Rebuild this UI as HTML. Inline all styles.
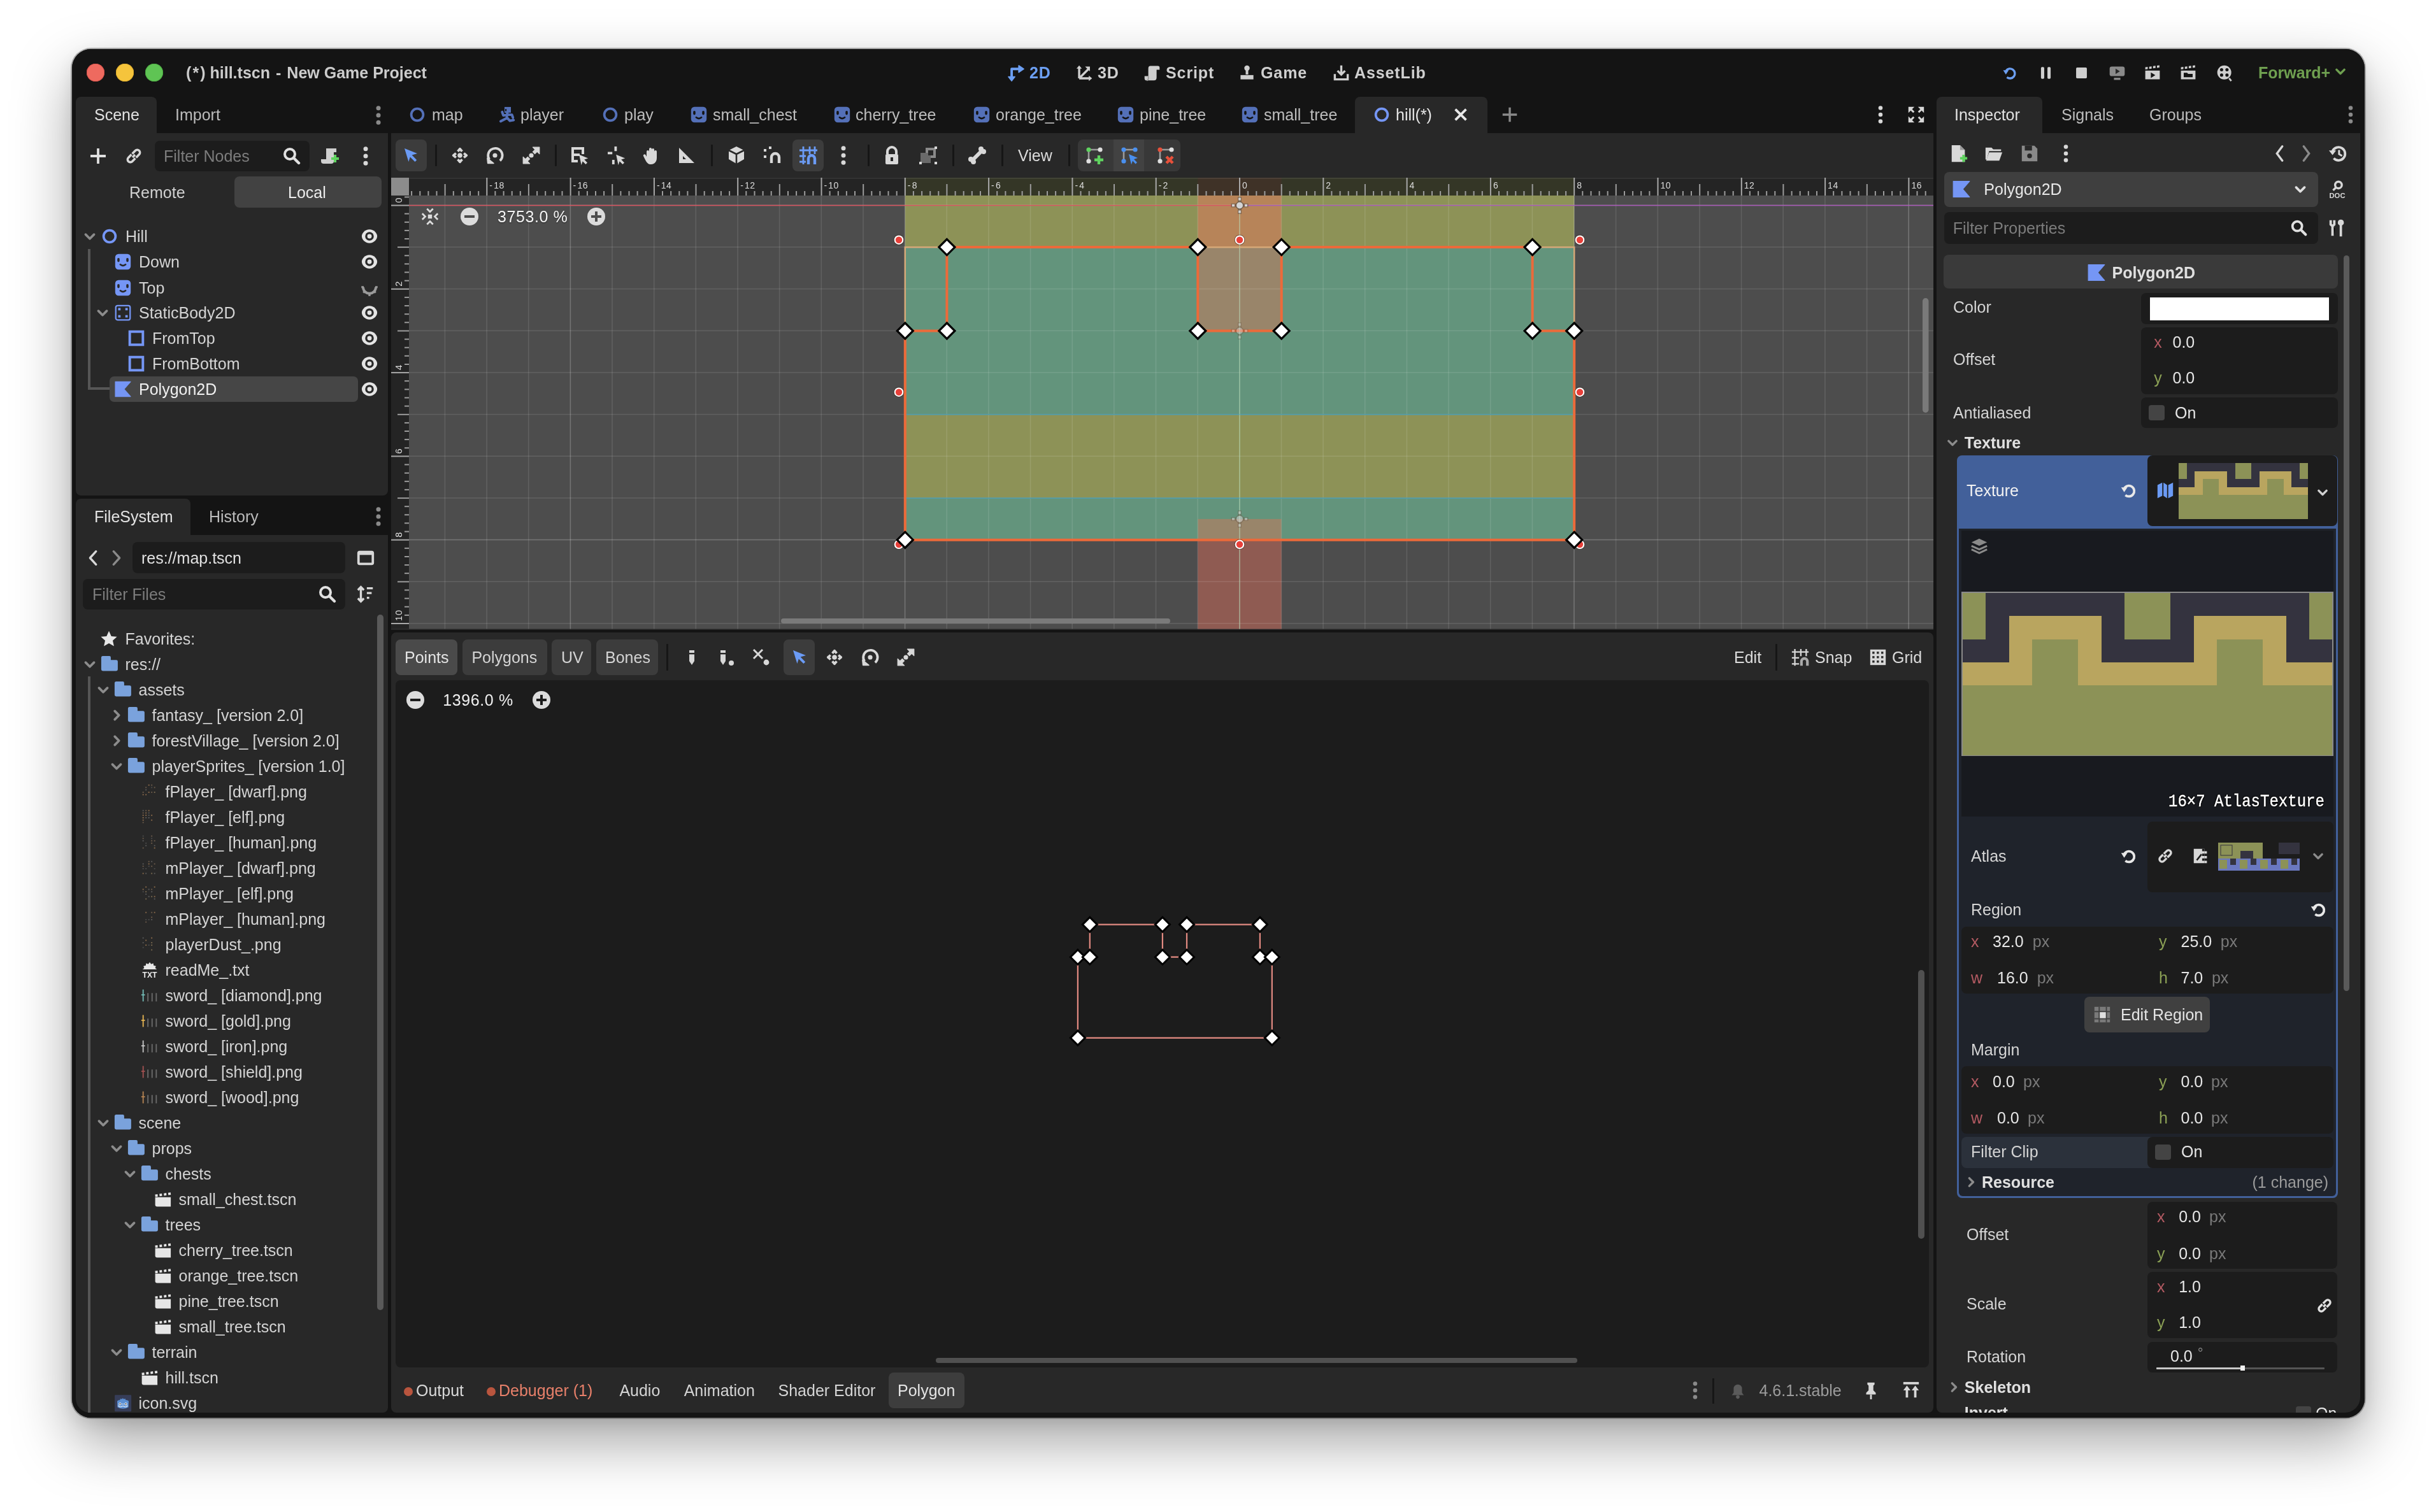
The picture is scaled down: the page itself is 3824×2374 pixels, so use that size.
<!DOCTYPE html>
<html><head><meta charset="utf-8"><title>Godot</title>
<style>
html,body{margin:0;padding:0;background:#fff;width:3824px;height:2374px;overflow:hidden;}
body{font-family:"Liberation Sans",sans-serif;position:relative;}
.a{position:absolute;}
.t{position:absolute;line-height:40px;white-space:nowrap;}
svg.a{overflow:visible;}
#win{position:absolute;left:112.5px;top:77px;width:3599px;height:2148.5px;background:#141414;border-radius:30px;overflow:hidden;
}
#shd{position:absolute;left:112.5px;top:77px;width:3599px;height:2148.5px;background:#141414;border-radius:30px;box-shadow:0 0 0 2px rgba(0,0,0,0.27),0 38px 92px rgba(0,0,0,0.36),0 8px 24px rgba(0,0,0,0.08);}
#pg{position:absolute;left:-112.5px;top:-77px;width:3824px;height:2374px;will-change:transform;}
</style></head><body>
<div id="shd"></div><div id="win"><div id="pg">

<div class="a" style="left:136px;top:100px;width:28px;height:28px;background:#ee6a5f;border-radius:14px;box-shadow:inset 0 0 0 0.8px #d9524a;"></div><div class="a" style="left:182px;top:100px;width:28px;height:28px;background:#f5c43c;border-radius:14px;box-shadow:inset 0 0 0 0.8px #dcaa2a;"></div><div class="a" style="left:228px;top:100px;width:28px;height:28px;background:#5fc454;border-radius:14px;box-shadow:inset 0 0 0 0.8px #4aa840;"></div><div class="t" style="left:292px;top:94px;font-size:25px;color:#cccccc;font-weight:bold;">(&#8202;*&#8202;) hill.tscn &#8202;- &#8202;New Game Project</div><svg class="a" style="left:1581.5px;top:100.5px;" width="27" height="27" viewBox="0 0 16 16"><path d="M3.6 12.5V4.3H11" stroke="#6c9ff2" stroke-width="2.3" fill="none" stroke-linejoin="round"/><path d="M10.2 1.2L14.8 4.3 10.2 7.4z" fill="#6c9ff2" stroke="#6c9ff2" stroke-width="1" stroke-linejoin="round"/><path d="M.6 11.6L3.6 15.4 6.6 11.6z" fill="#6c9ff2" stroke="#6c9ff2" stroke-width="1" stroke-linejoin="round"/></svg><div class="t" style="left:1616px;top:94px;font-size:25px;color:#6c9ff2;font-weight:bold;letter-spacing:0.9px;">2D</div><svg class="a" style="left:1688.5px;top:100.5px;" width="27" height="27" viewBox="0 0 16 16"><path d="M3 13V3M3 13h10M3 13l9-9" stroke="#cfcfcf" stroke-width="2" fill="none"/><path d="M3 1l-2.5 3h5zM15 13l-3-2.5v5zM13 2v4.5L8.5 2z" fill="#cfcfcf"/></svg><div class="t" style="left:1723px;top:94px;font-size:25px;color:#cfcfcf;font-weight:bold;letter-spacing:0.9px;">3D</div><svg class="a" style="left:1794.5px;top:100.5px;" width="27" height="27" viewBox="0 0 16 16"><path d="M6.5 1.5H13.5Q15 1.5 15 3V5H12.2V12.5Q12.2 15 9.7 15H3Q1 15 1 13V11H4.5V4Q4.5 1.5 6.5 1.5Z" fill="#cfcfcf"/><path d="M4.5 11V13.5Q4.5 15 3 15" stroke="#9a9a9a" stroke-width="1" fill="none"/></svg><div class="t" style="left:1830px;top:94px;font-size:25px;color:#cfcfcf;font-weight:bold;letter-spacing:0.9px;">Script</div><svg class="a" style="left:1943.5px;top:100.5px;" width="27" height="27" viewBox="0 0 16 16"><circle cx="8" cy="3.5" r="2.5" fill="#cfcfcf"/><path d="M6.8 5.5h2.4v4H6.8z" fill="#cfcfcf"/><path d="M2 10h12v4H2z" fill="#cfcfcf"/></svg><div class="t" style="left:1979px;top:94px;font-size:25px;color:#cfcfcf;font-weight:bold;letter-spacing:0.9px;">Game</div><svg class="a" style="left:2091.5px;top:100.5px;" width="27" height="27" viewBox="0 0 16 16"><path d="M8 1v8M4.5 6L8 9.5 11.5 6" stroke="#cfcfcf" stroke-width="2" fill="none"/><path d="M2 9v5h12V9" stroke="#cfcfcf" stroke-width="2" fill="none"/></svg><div class="t" style="left:2126px;top:94px;font-size:25px;color:#cfcfcf;font-weight:bold;letter-spacing:0.9px;">AssetLib</div><svg class="a" style="left:3141.5px;top:100.5px;" width="27" height="27" viewBox="0 0 16 16"><path d="M4.2 6A4.5 4.5 0 1 1 5 12" stroke="#6c9ff2" stroke-width="2" fill="none"/><path d="M1.5 5.5h5.2L4 9.5z" fill="#6c9ff2"/></svg><svg class="a" style="left:3197.5px;top:100.5px;" width="27" height="27" viewBox="0 0 16 16"><rect x="3.5" y="2.5" width="3" height="11" rx="1" fill="#cfcfcf"/><rect x="9.5" y="2.5" width="3" height="11" rx="1" fill="#cfcfcf"/></svg><svg class="a" style="left:3253.5px;top:100.5px;" width="27" height="27" viewBox="0 0 16 16"><rect x="3" y="3" width="10" height="10" rx="1" fill="#cfcfcf"/></svg><svg class="a" style="left:3309.5px;top:100.5px;" width="27" height="27" viewBox="0 0 16 16"><rect x="1" y="2" width="14" height="9" rx="2" fill="#8a8a8a"/><path d="M6.5 4v5l4-2.5z" fill="#282828"/><path d="M5 13.5h6" stroke="#8a8a8a" stroke-width="2"/></svg><svg class="a" style="left:3365.0px;top:100.0px;" width="28" height="28" viewBox="0 0 16 16"><path d="M1.5 6.2h13v7.8h-13z" fill="#cfcfcf"/><path d="M1.5 3.2l2.2-.3v2l-2.2.3zM5 2.7l2.2-.3v2l-2.2.3zM8.5 2.2l2.2-.3v2l-2.2.3zM12 1.7l2.2-.3v2l-2.2.3z" fill="#cfcfcf"/><path d="M6.5 7.8v5l4-2.5z" fill="#141414"/></svg><svg class="a" style="left:3421.0px;top:100.0px;" width="28" height="28" viewBox="0 0 16 16"><path d="M1.5 6.2h13v7.8h-13z" fill="#cfcfcf"/><path d="M1.5 3.2l2.2-.3v2l-2.2.3zM5 2.7l2.2-.3v2l-2.2.3zM8.5 2.2l2.2-.3v2l-2.2.3zM12 1.7l2.2-.3v2l-2.2.3z" fill="#cfcfcf"/><path d="M4 8.2h3l1 1h4v3H4z" fill="#141414"/></svg><svg class="a" style="left:3478.5px;top:100.5px;" width="27" height="27" viewBox="0 0 16 16"><circle cx="7.5" cy="7.5" r="6.5" fill="#cfcfcf"/><circle cx="5" cy="5" r="1.5" fill="#141414"/><circle cx="10" cy="5" r="1.5" fill="#141414"/><circle cx="5" cy="10" r="1.5" fill="#141414"/><circle cx="10" cy="10" r="1.5" fill="#141414"/><path d="M12 13l2 2.5" stroke="#cfcfcf" stroke-width="1.6"/></svg><div class="t" style="left:3545px;top:94px;font-size:25px;color:#6fa050;font-weight:bold;">Forward+</div><svg class="a" style="left:3660.0px;top:98.0px;" width="28" height="28" viewBox="0 0 16 16"><path d="M4.5 6.5L8 10l3.5-3.5" stroke="#6fa050" stroke-width="2" fill="none" stroke-linecap="round" stroke-linejoin="round"/></svg>
<div class="a" style="left:119px;top:152px;width:127px;height:60px;background:#282828;border-radius:8px 8px 0 0;"></div><div class="a" style="left:119px;top:208.5px;width:490px;height:569.5px;background:#282828;border-radius:0 0 8px 8px;"></div><div class="t" style="left:148px;top:160px;font-size:25px;color:#e2e2e2;">Scene</div><div class="t" style="left:275px;top:160px;font-size:25px;color:#bcbcbc;">Import</div><svg class="a" style="left:578.0px;top:165.0px;" width="32" height="32" viewBox="0 0 16 16"><circle cx="8" cy="2.4" r="1.75" fill="#8a8a8a"/><circle cx="8" cy="8" r="1.75" fill="#8a8a8a"/><circle cx="8" cy="13.6" r="1.75" fill="#8a8a8a"/></svg><svg class="a" style="left:138.0px;top:229.0px;" width="32" height="32" viewBox="0 0 16 16"><path d="M8 2v12M2 8h12" stroke="#e0e0e0" stroke-width="1.9"/></svg><svg class="a" style="left:194.0px;top:229.0px;" width="32" height="32" viewBox="0 0 16 16"><path d="M7 9l2-2" stroke="#d8d8d8" stroke-width="1.8"/><path d="M6.2 6.8l-2.4 2.4a2 2 0 0 0 3 3l2.4-2.4M9.8 9.2l2.4-2.4a2 2 0 0 0-3-3L6.8 6.2" stroke="#d8d8d8" stroke-width="1.8" fill="none"/></svg><div class="a" style="left:243px;top:221px;width:243px;height:48px;background:#1c1c1c;border-radius:8px;"></div><div class="t" style="left:257px;top:225px;font-size:25px;color:#7c7c7c;">Filter Nodes</div><svg class="a" style="left:442.0px;top:229.0px;" width="32" height="32" viewBox="0 0 16 16"><circle cx="6.5" cy="6.5" r="4" stroke="#e0e0e0" stroke-width="2" fill="none"/><path d="M9.5 9.5l4 4" stroke="#e0e0e0" stroke-width="2.2" stroke-linecap="round"/></svg><svg class="a" style="left:502.0px;top:229.0px;" width="32" height="32" viewBox="0 0 16 16"><path d="M5 2h8v3h-2v7a2 2 0 0 1-2 2H3a2 2 0 0 1-2-2v-1.5h4z" fill="#cfcfcf"/><path d="M9 10h6M12 7v6" stroke="#5fd35f" stroke-width="2"/></svg><svg class="a" style="left:558.0px;top:229.0px;" width="32" height="32" viewBox="0 0 16 16"><circle cx="8" cy="2.4" r="1.75" fill="#d8d8d8"/><circle cx="8" cy="8" r="1.75" fill="#d8d8d8"/><circle cx="8" cy="13.6" r="1.75" fill="#d8d8d8"/></svg><div class="t" style="left:203px;top:282px;font-size:25px;color:#d0d0d0;">Remote</div><div class="a" style="left:368px;top:277px;width:231px;height:49px;background:#424242;border-radius:8px;"></div><div class="t" style="left:452px;top:282px;font-size:25px;color:#ececec;">Local</div><div class="a" style="left:138px;top:391px;width:4px;height:221px;background:#565656;"></div><div class="a" style="left:138px;top:608px;width:34px;height:4px;background:#565656;"></div><div class="a" style="left:172px;top:591px;width:390px;height:40px;background:#464646;border-radius:7px;"></div><svg class="a" style="left:125.5px;top:356.0px;" width="30" height="30" viewBox="0 0 16 16"><path d="M4.5 6.5L8 10l3.5-3.5" stroke="#8c8c8c" stroke-width="2" fill="none" stroke-linecap="round" stroke-linejoin="round"/></svg><svg class="a" style="left:157.0px;top:356.0px;" width="30" height="30" viewBox="0 0 16 16"><circle cx="8" cy="8" r="5" stroke="#7596f5" stroke-width="2" fill="none"/></svg><div class="t" style="left:197px;top:351px;font-size:25px;color:#d4d4d4;">Hill</div><svg class="a" style="left:565.0px;top:356.0px;" width="30" height="30" viewBox="0 0 16 16"><path d="M8 2.3C4.3 2.3 1.55 5.4 1.55 8S4.3 13.7 8 13.7 14.45 10.6 14.45 8 11.7 2.3 8 2.3z" fill="#e4e4e4"/><circle cx="8" cy="8" r="3.6" fill="#282828"/><circle cx="8" cy="8" r="1.85" fill="#e4e4e4"/></svg><svg class="a" style="left:178.0px;top:396.0px;" width="30" height="30" viewBox="0 0 16 16"><rect x="1.5" y="1.5" width="13" height="13" rx="2.8" fill="#7596f5"/><rect x="3.3" y="4.8" width="1.9" height="3.4" rx=".95" fill="#282828"/><rect x="10.8" y="4.8" width="1.9" height="3.4" rx=".95" fill="#282828"/><path d="M5.8 10.3q2.2 1.9 4.4 0" stroke="#282828" stroke-width="1.4" fill="none" stroke-linecap="round"/></svg><div class="t" style="left:218px;top:391px;font-size:25px;color:#d4d4d4;">Down</div><svg class="a" style="left:565.0px;top:396.0px;" width="30" height="30" viewBox="0 0 16 16"><path d="M8 2.3C4.3 2.3 1.55 5.4 1.55 8S4.3 13.7 8 13.7 14.45 10.6 14.45 8 11.7 2.3 8 2.3z" fill="#e4e4e4"/><circle cx="8" cy="8" r="3.6" fill="#282828"/><circle cx="8" cy="8" r="1.85" fill="#e4e4e4"/></svg><svg class="a" style="left:178.0px;top:437.0px;" width="30" height="30" viewBox="0 0 16 16"><rect x="1.5" y="1.5" width="13" height="13" rx="2.8" fill="#7596f5"/><rect x="3.3" y="4.8" width="1.9" height="3.4" rx=".95" fill="#282828"/><rect x="10.8" y="4.8" width="1.9" height="3.4" rx=".95" fill="#282828"/><path d="M5.8 10.3q2.2 1.9 4.4 0" stroke="#282828" stroke-width="1.4" fill="none" stroke-linecap="round"/></svg><div class="t" style="left:218px;top:432px;font-size:25px;color:#d4d4d4;">Top</div><svg class="a" style="left:565.0px;top:437.0px;" width="30" height="30" viewBox="0 0 16 16"><g transform="translate(0 0.9)"><path d="M1.6 6.4A6.4 6.4 0 0 0 14.4 6.4H12.3A4.3 4.3 0 0 1 3.7 6.4Z" fill="#9a9a9a"/><rect x="7.1" y="12" width="1.8" height="2" fill="#9a9a9a"/><rect x="2.6" y="9.6" width="1.8" height="1.8" transform="rotate(45 3.5 10.5)" fill="#9a9a9a"/><rect x="11.6" y="9.6" width="1.8" height="1.8" transform="rotate(45 12.5 10.5)" fill="#9a9a9a"/><rect x="1.2" y="5.6" width="2" height="1.6" fill="#9a9a9a"/><rect x="12.8" y="5.6" width="2" height="1.6" fill="#9a9a9a"/></g></svg><svg class="a" style="left:146.0px;top:476.0px;" width="30" height="30" viewBox="0 0 16 16"><path d="M4.5 6.5L8 10l3.5-3.5" stroke="#8c8c8c" stroke-width="2" fill="none" stroke-linecap="round" stroke-linejoin="round"/></svg><svg class="a" style="left:178.0px;top:476.0px;" width="30" height="30" viewBox="0 0 16 16"><rect x="2" y="2" width="12" height="12" rx="1.5" stroke="#7596f5" stroke-width="1.2" fill="none"/><rect x="4" y="4" width="2" height="2" fill="#7596f5"/><rect x="10" y="4" width="2" height="2" fill="#7596f5"/><rect x="4" y="10" width="2" height="2" fill="#7596f5"/><rect x="10" y="10" width="2" height="2" fill="#7596f5"/></svg><div class="t" style="left:218px;top:471px;font-size:25px;color:#d4d4d4;">StaticBody2D</div><svg class="a" style="left:565.0px;top:476.0px;" width="30" height="30" viewBox="0 0 16 16"><path d="M8 2.3C4.3 2.3 1.55 5.4 1.55 8S4.3 13.7 8 13.7 14.45 10.6 14.45 8 11.7 2.3 8 2.3z" fill="#e4e4e4"/><circle cx="8" cy="8" r="3.6" fill="#282828"/><circle cx="8" cy="8" r="1.85" fill="#e4e4e4"/></svg><svg class="a" style="left:199.0px;top:516.0px;" width="30" height="30" viewBox="0 0 16 16"><rect x="2.5" y="2.5" width="11" height="11" stroke="#7596f5" stroke-width="2.1" fill="none"/></svg><div class="t" style="left:239px;top:511px;font-size:25px;color:#d4d4d4;">FromTop</div><svg class="a" style="left:565.0px;top:516.0px;" width="30" height="30" viewBox="0 0 16 16"><path d="M8 2.3C4.3 2.3 1.55 5.4 1.55 8S4.3 13.7 8 13.7 14.45 10.6 14.45 8 11.7 2.3 8 2.3z" fill="#e4e4e4"/><circle cx="8" cy="8" r="3.6" fill="#282828"/><circle cx="8" cy="8" r="1.85" fill="#e4e4e4"/></svg><svg class="a" style="left:199.0px;top:556.0px;" width="30" height="30" viewBox="0 0 16 16"><rect x="2.5" y="2.5" width="11" height="11" stroke="#7596f5" stroke-width="2.1" fill="none"/></svg><div class="t" style="left:239px;top:551px;font-size:25px;color:#d4d4d4;">FromBottom</div><svg class="a" style="left:565.0px;top:556.0px;" width="30" height="30" viewBox="0 0 16 16"><path d="M8 2.3C4.3 2.3 1.55 5.4 1.55 8S4.3 13.7 8 13.7 14.45 10.6 14.45 8 11.7 2.3 8 2.3z" fill="#e4e4e4"/><circle cx="8" cy="8" r="3.6" fill="#282828"/><circle cx="8" cy="8" r="1.85" fill="#e4e4e4"/></svg><svg class="a" style="left:178.0px;top:596.0px;" width="30" height="30" viewBox="0 0 16 16"><path d="M1.6 1.8h12.8L9 8l5.4 6.2H1.6z" fill="#7596f5" stroke="#7596f5" stroke-width=".6" stroke-linejoin="round"/></svg><div class="t" style="left:218px;top:591px;font-size:25px;color:#f0f0f0;">Polygon2D</div><svg class="a" style="left:565.0px;top:596.0px;" width="30" height="30" viewBox="0 0 16 16"><path d="M8 2.3C4.3 2.3 1.55 5.4 1.55 8S4.3 13.7 8 13.7 14.45 10.6 14.45 8 11.7 2.3 8 2.3z" fill="#e4e4e4"/><circle cx="8" cy="8" r="3.6" fill="#282828"/><circle cx="8" cy="8" r="1.85" fill="#e4e4e4"/></svg>
<div class="a" style="left:119px;top:783px;width:180px;height:60px;background:#282828;border-radius:8px 8px 0 0;"></div><div class="a" style="left:119px;top:839.5px;width:490px;height:1378.5px;background:#282828;border-radius:0 0 8px 22px;"></div><div class="t" style="left:148px;top:791px;font-size:25px;color:#e2e2e2;">FileSystem</div><div class="t" style="left:328px;top:791px;font-size:25px;color:#bcbcbc;">History</div><svg class="a" style="left:578.0px;top:795.0px;" width="32" height="32" viewBox="0 0 16 16"><circle cx="8" cy="2.4" r="1.75" fill="#8a8a8a"/><circle cx="8" cy="8" r="1.75" fill="#8a8a8a"/><circle cx="8" cy="13.6" r="1.75" fill="#8a8a8a"/></svg><svg class="a" style="left:132.0px;top:861.0px;" width="30" height="30" viewBox="0 0 16 16"><path d="M10 2.5L5 8l5 5.5" stroke="#d8d8d8" stroke-width="1.8" fill="none" stroke-linecap="round" stroke-linejoin="round"/></svg><svg class="a" style="left:167.0px;top:861.0px;" width="30" height="30" viewBox="0 0 16 16"><path d="M6 2.5L11 8l-5 5.5" stroke="#8a8a8a" stroke-width="1.8" fill="none" stroke-linecap="round" stroke-linejoin="round"/></svg><div class="a" style="left:208px;top:851px;width:334px;height:49px;background:#1c1c1c;border-radius:8px;"></div><div class="t" style="left:222px;top:856px;font-size:25px;color:#e0e0e0;">res://map.tscn</div><svg class="a" style="left:559.0px;top:861.0px;" width="30" height="30" viewBox="0 0 16 16"><rect x="2" y="3" width="12" height="10" rx="1" stroke="#d8d8d8" stroke-width="2" fill="none"/><rect x="2" y="3" width="12" height="2.5" fill="#d8d8d8"/></svg><div class="a" style="left:130px;top:909px;width:412px;height:48px;background:#1c1c1c;border-radius:8px;"></div><div class="t" style="left:145px;top:913px;font-size:25px;color:#7c7c7c;">Filter Files</div><svg class="a" style="left:498.0px;top:917.0px;" width="32" height="32" viewBox="0 0 16 16"><circle cx="6.5" cy="6.5" r="4" stroke="#e0e0e0" stroke-width="2" fill="none"/><path d="M9.5 9.5l4 4" stroke="#e0e0e0" stroke-width="2.2" stroke-linecap="round"/></svg><svg class="a" style="left:559.0px;top:918.0px;" width="30" height="30" viewBox="0 0 16 16"><path d="M4 2v12M1.5 4.5L4 2l2.5 2.5M1.5 11.5L4 14l2.5-2.5" stroke="#d8d8d8" stroke-width="1.8" fill="none"/><path d="M9 3h5M9 7h4M9 11h2" stroke="#d8d8d8" stroke-width="1.8"/></svg><div class="a" style="left:592px;top:965px;width:10px;height:1092px;background:#5a5a5a;border-radius:5px;"></div><div class="a" style="left:138px;top:1062px;width:4px;height:1156px;background:#565656;"></div><svg class="a" style="left:156.0px;top:988.0px;" width="30" height="30" viewBox="0 0 16 16"><path d="M8 1.5l2 4.3 4.7.5-3.5 3.2 1 4.6L8 11.7l-4.2 2.4 1-4.6L1.3 6.3 6 5.8z" fill="#e8e8e8"/></svg><div class="t" style="left:196.5px;top:983px;font-size:25px;color:#d4d4d4;">Favorites:</div><svg class="a" style="left:125.5px;top:1028.0px;" width="30" height="30" viewBox="0 0 16 16"><path d="M4.5 6.5L8 10l3.5-3.5" stroke="#8c8c8c" stroke-width="2" fill="none" stroke-linecap="round" stroke-linejoin="round"/></svg><svg class="a" style="left:156.0px;top:1027.0px;" width="32" height="32" viewBox="0 0 16 16"><path d="M1.45 2.8Q1.45 1.55 2.7 1.55H7.9Q8.96 1.55 8.96 2.6V4.6H13.2Q14.45 4.6 14.45 5.8V12Q14.45 13.2 13.2 13.2H2.7Q1.45 13.2 1.45 12Z" fill="#7aa2dc"/></svg><div class="t" style="left:196.5px;top:1023px;font-size:25px;color:#d4d4d4;">res://</div><svg class="a" style="left:146.5px;top:1068.0px;" width="30" height="30" viewBox="0 0 16 16"><path d="M4.5 6.5L8 10l3.5-3.5" stroke="#8c8c8c" stroke-width="2" fill="none" stroke-linecap="round" stroke-linejoin="round"/></svg><svg class="a" style="left:177.0px;top:1067.0px;" width="32" height="32" viewBox="0 0 16 16"><path d="M1.45 2.8Q1.45 1.55 2.7 1.55H7.9Q8.96 1.55 8.96 2.6V4.6H13.2Q14.45 4.6 14.45 5.8V12Q14.45 13.2 13.2 13.2H2.7Q1.45 13.2 1.45 12Z" fill="#7aa2dc"/></svg><div class="t" style="left:217.5px;top:1063px;font-size:25px;color:#d4d4d4;">assets</div><svg class="a" style="left:167.5px;top:1108.0px;" width="30" height="30" viewBox="0 0 16 16"><path d="M6.5 4.5L10 8l-3.5 3.5" stroke="#8c8c8c" stroke-width="2" fill="none" stroke-linecap="round" stroke-linejoin="round"/></svg><svg class="a" style="left:198.0px;top:1107.0px;" width="32" height="32" viewBox="0 0 16 16"><path d="M1.45 2.8Q1.45 1.55 2.7 1.55H7.9Q8.96 1.55 8.96 2.6V4.6H13.2Q14.45 4.6 14.45 5.8V12Q14.45 13.2 13.2 13.2H2.7Q1.45 13.2 1.45 12Z" fill="#7aa2dc"/></svg><div class="t" style="left:238.5px;top:1103px;font-size:25px;color:#d4d4d4;">fantasy_ [version 2.0]</div><svg class="a" style="left:167.5px;top:1148.0px;" width="30" height="30" viewBox="0 0 16 16"><path d="M6.5 4.5L10 8l-3.5 3.5" stroke="#8c8c8c" stroke-width="2" fill="none" stroke-linecap="round" stroke-linejoin="round"/></svg><svg class="a" style="left:198.0px;top:1147.0px;" width="32" height="32" viewBox="0 0 16 16"><path d="M1.45 2.8Q1.45 1.55 2.7 1.55H7.9Q8.96 1.55 8.96 2.6V4.6H13.2Q14.45 4.6 14.45 5.8V12Q14.45 13.2 13.2 13.2H2.7Q1.45 13.2 1.45 12Z" fill="#7aa2dc"/></svg><div class="t" style="left:238.5px;top:1143px;font-size:25px;color:#d4d4d4;">forestVillage_ [version 2.0]</div><svg class="a" style="left:167.5px;top:1188.0px;" width="30" height="30" viewBox="0 0 16 16"><path d="M4.5 6.5L8 10l3.5-3.5" stroke="#8c8c8c" stroke-width="2" fill="none" stroke-linecap="round" stroke-linejoin="round"/></svg><svg class="a" style="left:198.0px;top:1187.0px;" width="32" height="32" viewBox="0 0 16 16"><path d="M1.45 2.8Q1.45 1.55 2.7 1.55H7.9Q8.96 1.55 8.96 2.6V4.6H13.2Q14.45 4.6 14.45 5.8V12Q14.45 13.2 13.2 13.2H2.7Q1.45 13.2 1.45 12Z" fill="#7aa2dc"/></svg><div class="t" style="left:238.5px;top:1183px;font-size:25px;color:#d4d4d4;">playerSprites_ [version 1.0]</div><svg class="a" style="left:220.0px;top:1228.0px;" width="30" height="30" viewBox="0 0 16 16"><rect x="2.0" y="8.0" width="1" height="1" fill="#6b5a4a"/><rect x="2.0" y="10.0" width="1" height="1" fill="#8a6a4a"/><rect x="4.4" y="4.0" width="1" height="1" fill="#6b5a4a"/><rect x="4.4" y="6.0" width="1" height="1" fill="#5a5a5a"/><rect x="4.4" y="10.0" width="1" height="1" fill="#8a6a4a"/><rect x="6.8" y="2.0" width="1" height="1" fill="#8a6a4a"/><rect x="6.8" y="8.0" width="1" height="1" fill="#8a6a4a"/><rect x="9.2" y="2.0" width="1" height="1" fill="#6b5a4a"/><rect x="9.2" y="4.0" width="1" height="1" fill="#4a4a4a"/><rect x="9.2" y="8.0" width="1" height="1" fill="#6b5a4a"/><rect x="11.6" y="4.0" width="1" height="1" fill="#6b5a4a"/><rect x="11.6" y="8.0" width="1" height="1" fill="#7a6a50"/></svg><div class="t" style="left:259.5px;top:1223px;font-size:25px;color:#d4d4d4;">fPlayer_ [dwarf].png</div><svg class="a" style="left:220.0px;top:1268.0px;" width="30" height="30" viewBox="0 0 16 16"><rect x="2.0" y="2.0" width="1" height="1" fill="#5a5a5a"/><rect x="2.0" y="4.0" width="1" height="1" fill="#6b5a4a"/><rect x="2.0" y="6.0" width="1" height="1" fill="#8a6a4a"/><rect x="2.0" y="8.0" width="1" height="1" fill="#8a6a4a"/><rect x="2.0" y="10.0" width="1" height="1" fill="#8a6a4a"/><rect x="2.0" y="12.0" width="1" height="1" fill="#6b5a4a"/><rect x="4.4" y="2.0" width="1" height="1" fill="#6b5a4a"/><rect x="4.4" y="4.0" width="1" height="1" fill="#8a6a4a"/><rect x="4.4" y="6.0" width="1" height="1" fill="#8a6a4a"/><rect x="4.4" y="8.0" width="1" height="1" fill="#5a5a5a"/><rect x="6.8" y="2.0" width="1" height="1" fill="#8a6a4a"/><rect x="6.8" y="4.0" width="1" height="1" fill="#5a5a5a"/><rect x="6.8" y="6.0" width="1" height="1" fill="#5a5a5a"/><rect x="6.8" y="8.0" width="1" height="1" fill="#5a5a5a"/><rect x="9.2" y="6.0" width="1" height="1" fill="#8a6a4a"/><rect x="9.2" y="10.0" width="1" height="1" fill="#8a6a4a"/></svg><div class="t" style="left:259.5px;top:1263px;font-size:25px;color:#d4d4d4;">fPlayer_ [elf].png</div><svg class="a" style="left:220.0px;top:1308.0px;" width="30" height="30" viewBox="0 0 16 16"><rect x="2.0" y="2.0" width="1" height="1" fill="#4a4a4a"/><rect x="2.0" y="4.0" width="1" height="1" fill="#6b5a4a"/><rect x="2.0" y="6.0" width="1" height="1" fill="#5a5a5a"/><rect x="2.0" y="12.0" width="1" height="1" fill="#6b5a4a"/><rect x="4.4" y="8.0" width="1" height="1" fill="#4a4a4a"/><rect x="4.4" y="10.0" width="1" height="1" fill="#5a5a5a"/><rect x="9.2" y="2.0" width="1" height="1" fill="#6b5a4a"/><rect x="9.2" y="4.0" width="1" height="1" fill="#4a4a4a"/><rect x="9.2" y="6.0" width="1" height="1" fill="#6b5a4a"/><rect x="9.2" y="8.0" width="1" height="1" fill="#6b5a4a"/><rect x="11.6" y="6.0" width="1" height="1" fill="#6b5a4a"/><rect x="11.6" y="10.0" width="1" height="1" fill="#5a5a5a"/><rect x="11.6" y="12.0" width="1" height="1" fill="#8a6a4a"/></svg><div class="t" style="left:259.5px;top:1303px;font-size:25px;color:#d4d4d4;">fPlayer_ [human].png</div><svg class="a" style="left:220.0px;top:1348.0px;" width="30" height="30" viewBox="0 0 16 16"><rect x="2.0" y="4.0" width="1" height="1" fill="#5a5a5a"/><rect x="2.0" y="6.0" width="1" height="1" fill="#6b5a4a"/><rect x="2.0" y="8.0" width="1" height="1" fill="#4a4a4a"/><rect x="2.0" y="12.0" width="1" height="1" fill="#8a6a4a"/><rect x="4.4" y="8.0" width="1" height="1" fill="#4a4a4a"/><rect x="4.4" y="12.0" width="1" height="1" fill="#5a5a5a"/><rect x="6.8" y="2.0" width="1" height="1" fill="#6b5a4a"/><rect x="6.8" y="4.0" width="1" height="1" fill="#8a6a4a"/><rect x="6.8" y="6.0" width="1" height="1" fill="#4a4a4a"/><rect x="9.2" y="2.0" width="1" height="1" fill="#5a5a5a"/><rect x="9.2" y="6.0" width="1" height="1" fill="#6b5a4a"/><rect x="9.2" y="12.0" width="1" height="1" fill="#7a6a50"/><rect x="11.6" y="4.0" width="1" height="1" fill="#6b5a4a"/><rect x="11.6" y="8.0" width="1" height="1" fill="#4a4a4a"/><rect x="11.6" y="12.0" width="1" height="1" fill="#5a5a5a"/></svg><div class="t" style="left:259.5px;top:1343px;font-size:25px;color:#d4d4d4;">mPlayer_ [dwarf].png</div><svg class="a" style="left:220.0px;top:1388.0px;" width="30" height="30" viewBox="0 0 16 16"><rect x="2.0" y="4.0" width="1" height="1" fill="#8a6a4a"/><rect x="2.0" y="6.0" width="1" height="1" fill="#4a4a4a"/><rect x="4.4" y="2.0" width="1" height="1" fill="#8a6a4a"/><rect x="4.4" y="6.0" width="1" height="1" fill="#7a6a50"/><rect x="4.4" y="8.0" width="1" height="1" fill="#5a5a5a"/><rect x="4.4" y="12.0" width="1" height="1" fill="#7a6a50"/><rect x="6.8" y="4.0" width="1" height="1" fill="#5a5a5a"/><rect x="6.8" y="10.0" width="1" height="1" fill="#5a5a5a"/><rect x="9.2" y="4.0" width="1" height="1" fill="#6b5a4a"/><rect x="9.2" y="6.0" width="1" height="1" fill="#5a5a5a"/><rect x="9.2" y="10.0" width="1" height="1" fill="#7a6a50"/><rect x="11.6" y="2.0" width="1" height="1" fill="#8a6a4a"/><rect x="11.6" y="10.0" width="1" height="1" fill="#8a6a4a"/><rect x="11.6" y="12.0" width="1" height="1" fill="#5a5a5a"/></svg><div class="t" style="left:259.5px;top:1383px;font-size:25px;color:#d4d4d4;">mPlayer_ [elf].png</div><svg class="a" style="left:220.0px;top:1428.0px;" width="30" height="30" viewBox="0 0 16 16"><rect x="4.4" y="2.0" width="1" height="1" fill="#8a6a4a"/><rect x="4.4" y="8.0" width="1" height="1" fill="#4a4a4a"/><rect x="4.4" y="10.0" width="1" height="1" fill="#6b5a4a"/><rect x="6.8" y="8.0" width="1" height="1" fill="#4a4a4a"/><rect x="9.2" y="2.0" width="1" height="1" fill="#6b5a4a"/><rect x="9.2" y="6.0" width="1" height="1" fill="#6b5a4a"/><rect x="9.2" y="8.0" width="1" height="1" fill="#5a5a5a"/><rect x="11.6" y="2.0" width="1" height="1" fill="#8a6a4a"/></svg><div class="t" style="left:259.5px;top:1423px;font-size:25px;color:#d4d4d4;">mPlayer_ [human].png</div><svg class="a" style="left:220.0px;top:1468.0px;" width="30" height="30" viewBox="0 0 16 16"><rect x="2.0" y="2.0" width="1" height="1" fill="#5a5a5a"/><rect x="2.0" y="6.0" width="1" height="1" fill="#5a5a5a"/><rect x="2.0" y="10.0" width="1" height="1" fill="#4a4a4a"/><rect x="4.4" y="4.0" width="1" height="1" fill="#8a6a4a"/><rect x="4.4" y="8.0" width="1" height="1" fill="#8a6a4a"/><rect x="6.8" y="8.0" width="1" height="1" fill="#4a4a4a"/><rect x="9.2" y="2.0" width="1" height="1" fill="#8a6a4a"/><rect x="9.2" y="6.0" width="1" height="1" fill="#7a6a50"/><rect x="9.2" y="8.0" width="1" height="1" fill="#7a6a50"/><rect x="9.2" y="12.0" width="1" height="1" fill="#7a6a50"/></svg><div class="t" style="left:259.5px;top:1463px;font-size:25px;color:#d4d4d4;">playerDust_.png</div><svg class="a" style="left:220.0px;top:1508.0px;" width="30" height="30" viewBox="0 0 16 16"><path d="M8 1.5l1.2 1.5 1.8-.6.3 1.9 1.9.3-.6 1.8L14 7.5H2l1.4-1.1-.6-1.8 1.9-.3.3-1.9 1.8.6z" fill="#e8e8e8"/><text x="8" y="14.5" font-size="6.5" font-weight="bold" text-anchor="middle" fill="#e8e8e8" font-family="Liberation Sans">TXT</text></svg><div class="t" style="left:259.5px;top:1503px;font-size:25px;color:#d4d4d4;">readMe_.txt</div><svg class="a" style="left:220.0px;top:1548.0px;" width="30" height="30" viewBox="0 0 16 16"><rect x="2" y="3" width="1" height="10" fill="#6fb5b0"/><rect x="6" y="6" width="1" height="7" fill="#6a6a6a"/><rect x="9.5" y="6" width="1" height="7" fill="#6a6a6a"/><rect x="13" y="6" width="1" height="7" fill="#6a6a6a"/><rect x="1" y="7" width="3" height="1" fill="#6fb5b0"/></svg><div class="t" style="left:259.5px;top:1543px;font-size:25px;color:#d4d4d4;">sword_ [diamond].png</div><svg class="a" style="left:220.0px;top:1588.0px;" width="30" height="30" viewBox="0 0 16 16"><rect x="2" y="3" width="1" height="10" fill="#e0b050"/><rect x="6" y="6" width="1" height="7" fill="#6a6a6a"/><rect x="9.5" y="6" width="1" height="7" fill="#6a6a6a"/><rect x="13" y="6" width="1" height="7" fill="#6a6a6a"/><rect x="1" y="7" width="3" height="1" fill="#e0b050"/></svg><div class="t" style="left:259.5px;top:1583px;font-size:25px;color:#d4d4d4;">sword_ [gold].png</div><svg class="a" style="left:220.0px;top:1628.0px;" width="30" height="30" viewBox="0 0 16 16"><rect x="2" y="3" width="1" height="10" fill="#c0c0c0"/><rect x="6" y="6" width="1" height="7" fill="#6a6a6a"/><rect x="9.5" y="6" width="1" height="7" fill="#6a6a6a"/><rect x="13" y="6" width="1" height="7" fill="#6a6a6a"/><rect x="1" y="7" width="3" height="1" fill="#c0c0c0"/></svg><div class="t" style="left:259.5px;top:1623px;font-size:25px;color:#d4d4d4;">sword_ [iron].png</div><svg class="a" style="left:220.0px;top:1668.0px;" width="30" height="30" viewBox="0 0 16 16"><rect x="2" y="3" width="1" height="10" fill="#a05050"/><rect x="6" y="6" width="1" height="7" fill="#6a6a6a"/><rect x="9.5" y="6" width="1" height="7" fill="#6a6a6a"/><rect x="13" y="6" width="1" height="7" fill="#6a6a6a"/><rect x="1" y="7" width="3" height="1" fill="#a05050"/></svg><div class="t" style="left:259.5px;top:1663px;font-size:25px;color:#d4d4d4;">sword_ [shield].png</div><svg class="a" style="left:220.0px;top:1708.0px;" width="30" height="30" viewBox="0 0 16 16"><rect x="2" y="3" width="1" height="10" fill="#b08050"/><rect x="6" y="6" width="1" height="7" fill="#6a6a6a"/><rect x="9.5" y="6" width="1" height="7" fill="#6a6a6a"/><rect x="13" y="6" width="1" height="7" fill="#6a6a6a"/><rect x="1" y="7" width="3" height="1" fill="#b08050"/></svg><div class="t" style="left:259.5px;top:1703px;font-size:25px;color:#d4d4d4;">sword_ [wood].png</div><svg class="a" style="left:146.5px;top:1748.0px;" width="30" height="30" viewBox="0 0 16 16"><path d="M4.5 6.5L8 10l3.5-3.5" stroke="#8c8c8c" stroke-width="2" fill="none" stroke-linecap="round" stroke-linejoin="round"/></svg><svg class="a" style="left:177.0px;top:1747.0px;" width="32" height="32" viewBox="0 0 16 16"><path d="M1.45 2.8Q1.45 1.55 2.7 1.55H7.9Q8.96 1.55 8.96 2.6V4.6H13.2Q14.45 4.6 14.45 5.8V12Q14.45 13.2 13.2 13.2H2.7Q1.45 13.2 1.45 12Z" fill="#7aa2dc"/></svg><div class="t" style="left:217.5px;top:1743px;font-size:25px;color:#d4d4d4;">scene</div><svg class="a" style="left:167.5px;top:1788.0px;" width="30" height="30" viewBox="0 0 16 16"><path d="M4.5 6.5L8 10l3.5-3.5" stroke="#8c8c8c" stroke-width="2" fill="none" stroke-linecap="round" stroke-linejoin="round"/></svg><svg class="a" style="left:198.0px;top:1787.0px;" width="32" height="32" viewBox="0 0 16 16"><path d="M1.45 2.8Q1.45 1.55 2.7 1.55H7.9Q8.96 1.55 8.96 2.6V4.6H13.2Q14.45 4.6 14.45 5.8V12Q14.45 13.2 13.2 13.2H2.7Q1.45 13.2 1.45 12Z" fill="#7aa2dc"/></svg><div class="t" style="left:238.5px;top:1783px;font-size:25px;color:#d4d4d4;">props</div><svg class="a" style="left:188.5px;top:1828.0px;" width="30" height="30" viewBox="0 0 16 16"><path d="M4.5 6.5L8 10l3.5-3.5" stroke="#8c8c8c" stroke-width="2" fill="none" stroke-linecap="round" stroke-linejoin="round"/></svg><svg class="a" style="left:219.0px;top:1827.0px;" width="32" height="32" viewBox="0 0 16 16"><path d="M1.45 2.8Q1.45 1.55 2.7 1.55H7.9Q8.96 1.55 8.96 2.6V4.6H13.2Q14.45 4.6 14.45 5.8V12Q14.45 13.2 13.2 13.2H2.7Q1.45 13.2 1.45 12Z" fill="#7aa2dc"/></svg><div class="t" style="left:259.5px;top:1823px;font-size:25px;color:#d4d4d4;">chests</div><svg class="a" style="left:241.0px;top:1868.0px;" width="30" height="30" viewBox="0 0 16 16"><path d="M1.4 6.3H14.45V14.1H3Q1.4 14.1 1.4 12.5Z" fill="#e6e6e6"/><path d="M1.3 4l2.1-.3.2 2-2.1.3zM4.9 3.5l2.1-.3.2 2-2.1.3zM8.6 3l2.1-.3.2 2-2.1.3zM12.2 2.5l2.1-.3.2 2-2.1.3z" fill="#e6e6e6"/></svg><div class="t" style="left:280.5px;top:1863px;font-size:25px;color:#d4d4d4;">small_chest.tscn</div><svg class="a" style="left:188.5px;top:1908.0px;" width="30" height="30" viewBox="0 0 16 16"><path d="M4.5 6.5L8 10l3.5-3.5" stroke="#8c8c8c" stroke-width="2" fill="none" stroke-linecap="round" stroke-linejoin="round"/></svg><svg class="a" style="left:219.0px;top:1907.0px;" width="32" height="32" viewBox="0 0 16 16"><path d="M1.45 2.8Q1.45 1.55 2.7 1.55H7.9Q8.96 1.55 8.96 2.6V4.6H13.2Q14.45 4.6 14.45 5.8V12Q14.45 13.2 13.2 13.2H2.7Q1.45 13.2 1.45 12Z" fill="#7aa2dc"/></svg><div class="t" style="left:259.5px;top:1903px;font-size:25px;color:#d4d4d4;">trees</div><svg class="a" style="left:241.0px;top:1948.0px;" width="30" height="30" viewBox="0 0 16 16"><path d="M1.4 6.3H14.45V14.1H3Q1.4 14.1 1.4 12.5Z" fill="#e6e6e6"/><path d="M1.3 4l2.1-.3.2 2-2.1.3zM4.9 3.5l2.1-.3.2 2-2.1.3zM8.6 3l2.1-.3.2 2-2.1.3zM12.2 2.5l2.1-.3.2 2-2.1.3z" fill="#e6e6e6"/></svg><div class="t" style="left:280.5px;top:1943px;font-size:25px;color:#d4d4d4;">cherry_tree.tscn</div><svg class="a" style="left:241.0px;top:1988.0px;" width="30" height="30" viewBox="0 0 16 16"><path d="M1.4 6.3H14.45V14.1H3Q1.4 14.1 1.4 12.5Z" fill="#e6e6e6"/><path d="M1.3 4l2.1-.3.2 2-2.1.3zM4.9 3.5l2.1-.3.2 2-2.1.3zM8.6 3l2.1-.3.2 2-2.1.3zM12.2 2.5l2.1-.3.2 2-2.1.3z" fill="#e6e6e6"/></svg><div class="t" style="left:280.5px;top:1983px;font-size:25px;color:#d4d4d4;">orange_tree.tscn</div><svg class="a" style="left:241.0px;top:2028.0px;" width="30" height="30" viewBox="0 0 16 16"><path d="M1.4 6.3H14.45V14.1H3Q1.4 14.1 1.4 12.5Z" fill="#e6e6e6"/><path d="M1.3 4l2.1-.3.2 2-2.1.3zM4.9 3.5l2.1-.3.2 2-2.1.3zM8.6 3l2.1-.3.2 2-2.1.3zM12.2 2.5l2.1-.3.2 2-2.1.3z" fill="#e6e6e6"/></svg><div class="t" style="left:280.5px;top:2023px;font-size:25px;color:#d4d4d4;">pine_tree.tscn</div><svg class="a" style="left:241.0px;top:2068.0px;" width="30" height="30" viewBox="0 0 16 16"><path d="M1.4 6.3H14.45V14.1H3Q1.4 14.1 1.4 12.5Z" fill="#e6e6e6"/><path d="M1.3 4l2.1-.3.2 2-2.1.3zM4.9 3.5l2.1-.3.2 2-2.1.3zM8.6 3l2.1-.3.2 2-2.1.3zM12.2 2.5l2.1-.3.2 2-2.1.3z" fill="#e6e6e6"/></svg><div class="t" style="left:280.5px;top:2063px;font-size:25px;color:#d4d4d4;">small_tree.tscn</div><svg class="a" style="left:167.5px;top:2108.0px;" width="30" height="30" viewBox="0 0 16 16"><path d="M4.5 6.5L8 10l3.5-3.5" stroke="#8c8c8c" stroke-width="2" fill="none" stroke-linecap="round" stroke-linejoin="round"/></svg><svg class="a" style="left:198.0px;top:2107.0px;" width="32" height="32" viewBox="0 0 16 16"><path d="M1.45 2.8Q1.45 1.55 2.7 1.55H7.9Q8.96 1.55 8.96 2.6V4.6H13.2Q14.45 4.6 14.45 5.8V12Q14.45 13.2 13.2 13.2H2.7Q1.45 13.2 1.45 12Z" fill="#7aa2dc"/></svg><div class="t" style="left:238.5px;top:2103px;font-size:25px;color:#d4d4d4;">terrain</div><svg class="a" style="left:220.0px;top:2148.0px;" width="30" height="30" viewBox="0 0 16 16"><path d="M1.4 6.3H14.45V14.1H3Q1.4 14.1 1.4 12.5Z" fill="#e6e6e6"/><path d="M1.3 4l2.1-.3.2 2-2.1.3zM4.9 3.5l2.1-.3.2 2-2.1.3zM8.6 3l2.1-.3.2 2-2.1.3zM12.2 2.5l2.1-.3.2 2-2.1.3z" fill="#e6e6e6"/></svg><div class="t" style="left:259.5px;top:2143px;font-size:25px;color:#d4d4d4;">hill.tscn</div><svg class="a" style="left:178.0px;top:2188.0px;" width="30" height="30" viewBox="0 0 16 16"><rect x="1.1" y="1.2" width="13.9" height="13.9" rx=".6" fill="#363d58"/><path d="M3.2 6.3L4.6 5.4 5.6 5.5 5.8 4.3 7 4.6 7.9 3.8 8.8 4.6 10 4.3 10.2 5.5 11.3 5.4 12.8 6.3 12.6 11.4Q8 13.8 3.4 11.4Z" fill="#5b8fd2"/><circle cx="5.6" cy="8.7" r="1.1" fill="#fff"/><circle cx="10.4" cy="8.7" r="1.1" fill="#fff"/><circle cx="5.6" cy="8.7" r=".55" fill="#222"/><circle cx="10.4" cy="8.7" r=".55" fill="#222"/><rect x="7.6" y="8.4" width=".8" height=".8" fill="#fff"/><path d="M4 10.2h.7v.9h2.2v-.5h2.2v.5h2.2v-.9h.7" stroke="#fff" stroke-width=".5" fill="none"/></svg><div class="t" style="left:217.5px;top:2183px;font-size:25px;color:#d4d4d4;">icon.svg</div>
<svg class="a" style="left:640.0px;top:165.0px;" width="30" height="30" viewBox="0 0 16 16"><circle cx="8" cy="8" r="5" stroke="#5470b8" stroke-width="2" fill="none"/></svg><div class="t" style="left:678px;top:160px;font-size:25px;color:#bdbdbd;">map</div><svg class="a" style="left:781.0px;top:165.0px;" width="30" height="30" viewBox="0 0 16 16"><rect x="5.84" y="1.57" width="5.37" height="4.79" fill="#5470b8"/><rect x="6.41" y="3.26" width="1.13" height="1.97" rx="0.5" fill="#141414"/><path d="M8.24 5.80 L7.68 11.16 M3.87 5.80 L4.86 8.62 L8.38 8.20 M8.24 8.06 L12.05 8.06 L12.90 10.46 M7.68 10.88 L2.60 13.56 M8.10 10.74 L10.36 13.14 L13.46 12.57" stroke="#5470b8" stroke-width="2.12" fill="none" stroke-linecap="round" stroke-linejoin="round"/></svg><div class="t" style="left:817px;top:160px;font-size:25px;color:#bdbdbd;">player</div><svg class="a" style="left:943.0px;top:165.0px;" width="30" height="30" viewBox="0 0 16 16"><circle cx="8" cy="8" r="5" stroke="#5470b8" stroke-width="2" fill="none"/></svg><div class="t" style="left:980px;top:160px;font-size:25px;color:#bdbdbd;">play</div><svg class="a" style="left:1082.0px;top:165.0px;" width="30" height="30" viewBox="0 0 16 16"><rect x="1.5" y="1.5" width="13" height="13" rx="2.8" fill="#5470b8"/><rect x="3.3" y="4.8" width="1.9" height="3.4" rx=".95" fill="#141414"/><rect x="10.8" y="4.8" width="1.9" height="3.4" rx=".95" fill="#141414"/><path d="M5.8 10.3q2.2 1.9 4.4 0" stroke="#141414" stroke-width="1.4" fill="none" stroke-linecap="round"/></svg><div class="t" style="left:1119px;top:160px;font-size:25px;color:#bdbdbd;">small_chest</div><svg class="a" style="left:1306.5px;top:165.0px;" width="30" height="30" viewBox="0 0 16 16"><rect x="1.5" y="1.5" width="13" height="13" rx="2.8" fill="#5470b8"/><rect x="3.3" y="4.8" width="1.9" height="3.4" rx=".95" fill="#141414"/><rect x="10.8" y="4.8" width="1.9" height="3.4" rx=".95" fill="#141414"/><path d="M5.8 10.3q2.2 1.9 4.4 0" stroke="#141414" stroke-width="1.4" fill="none" stroke-linecap="round"/></svg><div class="t" style="left:1343px;top:160px;font-size:25px;color:#bdbdbd;">cherry_tree</div><svg class="a" style="left:1525.5px;top:165.0px;" width="30" height="30" viewBox="0 0 16 16"><rect x="1.5" y="1.5" width="13" height="13" rx="2.8" fill="#5470b8"/><rect x="3.3" y="4.8" width="1.9" height="3.4" rx=".95" fill="#141414"/><rect x="10.8" y="4.8" width="1.9" height="3.4" rx=".95" fill="#141414"/><path d="M5.8 10.3q2.2 1.9 4.4 0" stroke="#141414" stroke-width="1.4" fill="none" stroke-linecap="round"/></svg><div class="t" style="left:1563px;top:160px;font-size:25px;color:#bdbdbd;">orange_tree</div><svg class="a" style="left:1751.5px;top:165.0px;" width="30" height="30" viewBox="0 0 16 16"><rect x="1.5" y="1.5" width="13" height="13" rx="2.8" fill="#5470b8"/><rect x="3.3" y="4.8" width="1.9" height="3.4" rx=".95" fill="#141414"/><rect x="10.8" y="4.8" width="1.9" height="3.4" rx=".95" fill="#141414"/><path d="M5.8 10.3q2.2 1.9 4.4 0" stroke="#141414" stroke-width="1.4" fill="none" stroke-linecap="round"/></svg><div class="t" style="left:1789px;top:160px;font-size:25px;color:#bdbdbd;">pine_tree</div><svg class="a" style="left:1946.5px;top:165.0px;" width="30" height="30" viewBox="0 0 16 16"><rect x="1.5" y="1.5" width="13" height="13" rx="2.8" fill="#5470b8"/><rect x="3.3" y="4.8" width="1.9" height="3.4" rx=".95" fill="#141414"/><rect x="10.8" y="4.8" width="1.9" height="3.4" rx=".95" fill="#141414"/><path d="M5.8 10.3q2.2 1.9 4.4 0" stroke="#141414" stroke-width="1.4" fill="none" stroke-linecap="round"/></svg><div class="t" style="left:1984px;top:160px;font-size:25px;color:#bdbdbd;">small_tree</div><div class="a" style="left:2127px;top:152px;width:208px;height:60px;background:#282828;border-radius:8px 8px 0 0;"></div><svg class="a" style="left:2153.5px;top:165.0px;" width="30" height="30" viewBox="0 0 16 16"><circle cx="8" cy="8" r="5" stroke="#7596f5" stroke-width="2" fill="none"/></svg><div class="t" style="left:2191px;top:160px;font-size:25px;color:#e6e6e6;">hill(*)</div><svg class="a" style="left:2277.5px;top:165.0px;" width="30" height="30" viewBox="0 0 16 16"><path d="M3.5 3.5l9 9M12.5 3.5l-9 9" stroke="#e8e8e8" stroke-width="2"/></svg><svg class="a" style="left:2355.0px;top:165.0px;" width="30" height="30" viewBox="0 0 16 16"><path d="M8 2v12M2 8h12" stroke="#8a8a8a" stroke-width="1.8"/></svg><svg class="a" style="left:2937.0px;top:165.0px;" width="30" height="30" viewBox="0 0 16 16"><circle cx="8" cy="2.4" r="1.75" fill="#d8d8d8"/><circle cx="8" cy="8" r="1.75" fill="#d8d8d8"/><circle cx="8" cy="13.6" r="1.75" fill="#d8d8d8"/></svg><svg class="a" style="left:2993.0px;top:165.0px;" width="30" height="30" viewBox="0 0 16 16"><path d="M1.5 1.5h5l-5 5zM14.5 1.5v5l-5-5zM1.5 14.5v-5l5 5zM14.5 14.5h-5l5-5z" fill="#d8d8d8"/><path d="M3 3l3 3M13 3l-3 3M3 13l3-3M13 13l-3-3" stroke="#d8d8d8" stroke-width="1.6"/></svg><div class="a" style="left:614px;top:208.5px;width:2421px;height:780px;background:#282828;border-radius:0;"></div><div class="a" style="left:621px;top:219px;width:48.5px;height:49.5px;background:#3c3c3c;border-radius:8px;"></div><svg class="a" style="left:629.0px;top:227.5px;" width="32" height="32" viewBox="0 0 16 16"><path d="M3 2.5l10 4-4.2 1.3 3.8 3.8-1.4 1.4-3.8-3.8L6.2 13z" fill="#6b9bf5"/></svg><div class="a" style="left:682.5px;top:227px;width:3px;height:34px;background:#161616;border-radius:1px;"></div><div class="a" style="left:871.1px;top:227px;width:3px;height:34px;background:#161616;border-radius:1px;"></div><div class="a" style="left:1115.5px;top:227px;width:3px;height:34px;background:#161616;border-radius:1px;"></div><div class="a" style="left:1361.5px;top:227px;width:3px;height:34px;background:#161616;border-radius:1px;"></div><div class="a" style="left:1494.5px;top:227px;width:3px;height:34px;background:#161616;border-radius:1px;"></div><div class="a" style="left:1571.5px;top:227px;width:3px;height:34px;background:#161616;border-radius:1px;"></div><div class="a" style="left:1676.5px;top:227px;width:3px;height:34px;background:#161616;border-radius:1px;"></div><svg class="a" style="left:706.0px;top:227.5px;" width="32" height="32" viewBox="0 0 16 16"><path d="M6.3 4.9L8 2.9 9.7 4.9M6.3 11.1L8 13.1 9.7 11.1M4.9 6.3L2.9 8 4.9 9.7M11.1 6.3L13.1 8 11.1 9.7" stroke="#d8d8d8" stroke-width="1.9" fill="none" stroke-linecap="butt" stroke-linejoin="round"/><circle cx="8" cy="8" r="1.9" fill="#d8d8d8"/></svg><svg class="a" style="left:761.3px;top:227.5px;" width="32" height="32" viewBox="0 0 16 16"><path d="M3.6 11.2A5.6 5.6 0 1 1 11.9 12.2" stroke="#d8d8d8" stroke-width="1.9" fill="none"/><path d="M2 10.2L6.9 14.2 2.4 14.2z" fill="#d8d8d8" stroke="#d8d8d8" stroke-width=".9" stroke-linejoin="round"/><circle cx="8" cy="8" r="1.8" fill="#d8d8d8"/></svg><svg class="a" style="left:818.0px;top:227.5px;" width="32" height="32" viewBox="0 0 16 16"><path d="M9.2 1.6H14.4V6.8L12.6 5 10.8 6.8 9.2 5.2 11 3.4z" fill="#d8d8d8" stroke="#d8d8d8" stroke-width=".6" stroke-linejoin="round"/><path d="M6.8 14.4H1.6V9.2L3.4 11 5.2 9.2 6.8 10.8 5 12.6z" fill="#d8d8d8" stroke="#d8d8d8" stroke-width=".6" stroke-linejoin="round"/><circle cx="8" cy="8" r="1.8" fill="#d8d8d8"/></svg><svg class="a" style="left:894.0px;top:227.5px;" width="32" height="32" viewBox="0 0 16 16"><path d="M1.5 1.5h10v5.5h-2V3.5H3.5v3h4.5v2H3.5v3h3v2h-5z" fill="#d8d8d8"/><path d="M7.6 7.4l7 2.9-3 1 2.4 2.4-1.3 1.3-2.4-2.4-1 3z" fill="#d8d8d8"/></svg><svg class="a" style="left:951.6px;top:227.5px;" width="32" height="32" viewBox="0 0 16 16"><path d="M1 6.2h3.6M7.2 1v3.6" stroke="#d8d8d8" stroke-width="1.9"/><path d="M5.4 11.5v3.5" stroke="#d8d8d8" stroke-width="1.9"/><path d="M7.6 7.4l7 2.9-3 1 2.4 2.4-1.3 1.3-2.4-2.4-1 3z" fill="#d8d8d8"/></svg><svg class="a" style="left:1007.0px;top:227.5px;" width="32" height="32" viewBox="0 0 16 16"><path d="M4 9V5a1 1 0 0 1 2 0v3V3a1 1 0 0 1 2 0v5V3.5a1 1 0 0 1 2 0V8V5a1 1 0 0 1 2 0v5c0 3-2 5-4.5 5S4 13.5 3 11.5L1.5 8.5a1 1 0 0 1 1.7-1z" fill="#d8d8d8"/></svg><svg class="a" style="left:1061.7px;top:227.5px;" width="32" height="32" viewBox="0 0 16 16"><path d="M2 14V2l12 12z" fill="#d8d8d8"/><path d="M5 11V8.5L7.5 11z" fill="#282828"/></svg><svg class="a" style="left:1140.0px;top:227.5px;" width="32" height="32" viewBox="0 0 16 16"><path d="M8 1l6 3v7l-6 3.5L2 11V4z" fill="#d8d8d8"/><path d="M2 4l6 3 6-3M8 7v7.5" stroke="#282828" stroke-width="1.3" fill="none"/></svg><svg class="a" style="left:1197.0px;top:227.5px;" width="32" height="32" viewBox="0 0 16 16"><rect x="1" y="3" width="2" height="2" fill="#d8d8d8"/><rect x="5" y="1" width="2" height="2" fill="#d8d8d8"/><rect x="1" y="8" width="2" height="2" fill="#d8d8d8"/><path d="M7 14V9.5a3 3 0 0 1 6 0V14" stroke="#d8d8d8" stroke-width="2.2" fill="none"/></svg><div class="a" style="left:1244px;top:219px;width:49px;height:49.5px;background:#3c3c3c;border-radius:8px;"></div><svg class="a" style="left:1252.5px;top:227.5px;" width="32" height="32" viewBox="0 0 16 16"><path d="M1 4h14M1 8.5h5M1 13h5M4 1v14M9 1v6M13 1v6" stroke="#6b9bf5" stroke-width="1.4"/><path d="M8 15V10.5a2.5 2.5 0 0 1 5 0V15" stroke="#6b9bf5" stroke-width="2.2" fill="none"/></svg><svg class="a" style="left:1308.0px;top:227.5px;" width="32" height="32" viewBox="0 0 16 16"><circle cx="8" cy="2.4" r="1.75" fill="#d8d8d8"/><circle cx="8" cy="8" r="1.75" fill="#d8d8d8"/><circle cx="8" cy="13.6" r="1.75" fill="#d8d8d8"/></svg><svg class="a" style="left:1384.0px;top:227.5px;" width="32" height="32" viewBox="0 0 16 16"><path d="M4.5 7V5a3.5 3.5 0 0 1 7 0v2" stroke="#d8d8d8" stroke-width="2" fill="none"/><rect x="3" y="7" width="10" height="8" rx="1" fill="#d8d8d8"/><rect x="7" y="9.5" width="2" height="3" fill="#282828"/></svg><svg class="a" style="left:1441.0px;top:227.5px;" width="32" height="32" viewBox="0 0 16 16"><rect x="6" y="2" width="8" height="8" fill="#8a8a8a"/><rect x="2" y="6" width="8" height="8" fill="#6a6a6a"/><rect x="1" y="13" width="2" height="2" fill="#d8d8d8"/><rect x="13" y="1" width="2" height="2" fill="#d8d8d8"/><rect x="13" y="13" width="2" height="2" fill="#d8d8d8"/><rect x="8" y="4" width="4" height="4" fill="#282828"/></svg><svg class="a" style="left:1518.0px;top:227.5px;" width="32" height="32" viewBox="0 0 16 16"><path d="M4.5 11.5l7-7" stroke="#d8d8d8" stroke-width="3"/><circle cx="3" cy="11" r="2" fill="#d8d8d8"/><circle cx="5" cy="13" r="2" fill="#d8d8d8"/><circle cx="11" cy="3" r="2" fill="#d8d8d8"/><circle cx="13" cy="5" r="2" fill="#d8d8d8"/></svg><div class="t" style="left:1598px;top:223.5px;font-size:25px;color:#dcdcdc;">View</div><div class="a" style="left:1692px;top:219px;width:161px;height:49.5px;background:#383838;border-radius:8px;"></div><div class="a" style="left:1748px;top:219px;width:48px;height:49.5px;background:#424242;border-radius:0px;"></div><svg class="a" style="left:1702.6px;top:227.5px;" width="32" height="32" viewBox="0 0 16 16"><path d="M3 3.5h9M3 3.5v9" stroke="#9a9a9a" stroke-width="1.3"/><circle cx="3" cy="3.5" r="1.8" fill="#5fd35f"/><circle cx="12" cy="3.5" r="1.8" fill="#e0e0e0"/><circle cx="3" cy="12.5" r="1.8" fill="#e0e0e0"/><path d="M11 8v7M7.5 11.5h7" stroke="#5fd35f" stroke-width="2.2"/></svg><svg class="a" style="left:1758.0px;top:227.5px;" width="32" height="32" viewBox="0 0 16 16"><path d="M3 3.5h9M3 3.5v9" stroke="#9a9a9a" stroke-width="1.3"/><circle cx="3" cy="3.5" r="1.8" fill="#4a90f0"/><circle cx="12" cy="3.5" r="1.8" fill="#4a90f0"/><circle cx="3" cy="12.5" r="1.8" fill="#4a90f0"/><path d="M7 7l7 3-3 1 2.5 2.5-1.2 1.2L10 12.3l-1 3z" fill="#4a90f0"/></svg><svg class="a" style="left:1814.5px;top:227.5px;" width="32" height="32" viewBox="0 0 16 16"><path d="M3 3.5h9M3 3.5v9" stroke="#9a9a9a" stroke-width="1.3"/><circle cx="3" cy="3.5" r="1.8" fill="#e8503a"/><circle cx="12" cy="3.5" r="1.8" fill="#e0e0e0"/><circle cx="3" cy="12.5" r="1.8" fill="#e0e0e0"/><path d="M8 9l5 5M13 9l-5 5" stroke="#e8503a" stroke-width="2.2"/></svg><svg class="a" style="left:614px;top:279px" width="2421" height="708.5" viewBox="0 0 2421 708.5"><rect x="0" y="0" width="2421" height="708.5" fill="#4d4d4d"/><rect x="806.8" y="0" width="1050.3999999999999" height="109.14999999999998" fill="#8d9257"/><rect x="806.8" y="109.14999999999998" width="1050.3999999999999" height="262.6" fill="#63947c"/><rect x="806.8" y="371.75" width="1050.3999999999999" height="131.30000000000007" fill="#8d9257"/><rect x="806.8" y="503.05000000000007" width="1050.3999999999999" height="65.64999999999998" fill="#63947c"/><rect x="1266.35" y="0" width="131.30000000000018" height="109.14999999999998" fill="#b78459"/><rect x="1266.35" y="109.14999999999998" width="131.30000000000018" height="131.30000000000007" fill="#99856a"/><rect x="1266.35" y="535.875" width="131.30000000000018" height="32.825000000000045" fill="#99856a"/><rect x="1266.35" y="568.7" width="131.30000000000018" height="139.79999999999995" fill="#8f5b52"/><rect x="83.6" y="28" width="1.6" height="680.5" fill="rgba(255,255,255,0.11)"/><rect x="149.3" y="28" width="1.6" height="680.5" fill="rgba(255,255,255,0.11)"/><rect x="214.9" y="28" width="1.6" height="680.5" fill="rgba(255,255,255,0.11)"/><rect x="280.6" y="28" width="1.6" height="680.5" fill="rgba(255,255,255,0.22)"/><rect x="346.2" y="28" width="1.6" height="680.5" fill="rgba(255,255,255,0.11)"/><rect x="411.9" y="28" width="1.6" height="680.5" fill="rgba(255,255,255,0.11)"/><rect x="477.5" y="28" width="1.6" height="680.5" fill="rgba(255,255,255,0.11)"/><rect x="543.2" y="28" width="1.6" height="680.5" fill="rgba(255,255,255,0.11)"/><rect x="608.8" y="28" width="1.6" height="680.5" fill="rgba(255,255,255,0.11)"/><rect x="674.5" y="28" width="1.6" height="680.5" fill="rgba(255,255,255,0.11)"/><rect x="740.2" y="28" width="1.6" height="680.5" fill="rgba(255,255,255,0.11)"/><rect x="805.8" y="28" width="1.6" height="680.5" fill="rgba(255,255,255,0.22)"/><rect x="871.4" y="28" width="1.6" height="680.5" fill="rgba(255,255,255,0.11)"/><rect x="937.1" y="28" width="1.6" height="680.5" fill="rgba(255,255,255,0.11)"/><rect x="1002.8" y="28" width="1.6" height="680.5" fill="rgba(255,255,255,0.11)"/><rect x="1068.4" y="28" width="1.6" height="680.5" fill="rgba(255,255,255,0.11)"/><rect x="1134.0" y="28" width="1.6" height="680.5" fill="rgba(255,255,255,0.11)"/><rect x="1199.7" y="28" width="1.6" height="680.5" fill="rgba(255,255,255,0.11)"/><rect x="1265.3" y="28" width="1.6" height="680.5" fill="rgba(255,255,255,0.11)"/><rect x="1331.0" y="28" width="1.6" height="680.5" fill="rgba(255,255,255,0.22)"/><rect x="1396.7" y="28" width="1.6" height="680.5" fill="rgba(255,255,255,0.11)"/><rect x="1462.3" y="28" width="1.6" height="680.5" fill="rgba(255,255,255,0.11)"/><rect x="1527.9" y="28" width="1.6" height="680.5" fill="rgba(255,255,255,0.11)"/><rect x="1593.6" y="28" width="1.6" height="680.5" fill="rgba(255,255,255,0.11)"/><rect x="1659.2" y="28" width="1.6" height="680.5" fill="rgba(255,255,255,0.11)"/><rect x="1724.9" y="28" width="1.6" height="680.5" fill="rgba(255,255,255,0.11)"/><rect x="1790.6" y="28" width="1.6" height="680.5" fill="rgba(255,255,255,0.11)"/><rect x="1856.2" y="28" width="1.6" height="680.5" fill="rgba(255,255,255,0.22)"/><rect x="1921.8" y="28" width="1.6" height="680.5" fill="rgba(255,255,255,0.11)"/><rect x="1987.5" y="28" width="1.6" height="680.5" fill="rgba(255,255,255,0.11)"/><rect x="2053.2" y="28" width="1.6" height="680.5" fill="rgba(255,255,255,0.11)"/><rect x="2118.8" y="28" width="1.6" height="680.5" fill="rgba(255,255,255,0.11)"/><rect x="2184.4" y="28" width="1.6" height="680.5" fill="rgba(255,255,255,0.11)"/><rect x="2250.1" y="28" width="1.6" height="680.5" fill="rgba(255,255,255,0.11)"/><rect x="2315.8" y="28" width="1.6" height="680.5" fill="rgba(255,255,255,0.11)"/><rect x="2381.4" y="28" width="1.6" height="680.5" fill="rgba(255,255,255,0.22)"/><rect x="28" y="42.5" width="2393" height="1.6" fill="rgba(255,255,255,0.22)"/><rect x="28" y="108.1" width="2393" height="1.6" fill="rgba(255,255,255,0.11)"/><rect x="28" y="173.8" width="2393" height="1.6" fill="rgba(255,255,255,0.11)"/><rect x="28" y="239.5" width="2393" height="1.6" fill="rgba(255,255,255,0.11)"/><rect x="28" y="305.1" width="2393" height="1.6" fill="rgba(255,255,255,0.11)"/><rect x="28" y="370.8" width="2393" height="1.6" fill="rgba(255,255,255,0.11)"/><rect x="28" y="436.4" width="2393" height="1.6" fill="rgba(255,255,255,0.11)"/><rect x="28" y="502.1" width="2393" height="1.6" fill="rgba(255,255,255,0.11)"/><rect x="28" y="567.7" width="2393" height="1.6" fill="rgba(255,255,255,0.22)"/><rect x="28" y="633.4" width="2393" height="1.6" fill="rgba(255,255,255,0.11)"/><rect x="28" y="699.0" width="2393" height="1.6" fill="rgba(255,255,255,0.11)"/><rect x="806.8" y="370.9" width="1050.3999999999999" height="1.8" fill="#4f9cad" opacity="0.9"/><rect x="806.8" y="502.2" width="1050.3999999999999" height="1.8" fill="#4f9cad" opacity="0.9"/><rect x="806.8" y="109.14999999999998" width="1050.3999999999999" height="459.55000000000007" fill="none" stroke="#d6a878" stroke-width="2.5"/><path d="M806.8 240.5 L872.4 240.5 L872.4 109.1 L1266.3 109.1 L1266.3 240.5 L1397.7 240.5 L1397.7 109.1 L1791.6 109.1 L1791.6 240.5 L1857.2 240.5 L1857.2 568.7 L806.8 568.7 Z" fill="none" stroke="#ec6a3a" stroke-width="4" stroke-linejoin="miter"/><rect x="1331.0" y="28" width="2" height="680.5" fill="rgba(165,210,165,0.38)"/><rect x="28" y="42.8" width="1304.0" height="1.5" fill="#d85560"/><rect x="1332.0" y="42.8" width="1089.0" height="1.5" fill="#a85ab8"/><g opacity="1.0" transform="translate(1332.0,43.5)"><rect x="-13.5" y="-3" width="27" height="6" fill="#6a5a48" opacity="0.7"/><rect x="-3" y="-13.5" width="6" height="27" fill="#6a5a48" opacity="0.7"/><circle r="6.5" fill="#6a5a48" opacity="0.8"/><circle r="5" fill="#d4d4d4"/><rect x="-12" y="-1.8" width="4" height="3.6" fill="#d4d4d4"/><rect x="8" y="-1.8" width="4" height="3.6" fill="#d4d4d4"/><rect x="-1.8" y="-12" width="3.6" height="4" fill="#d4d4d4"/><rect x="-1.8" y="8" width="3.6" height="4" fill="#d4d4d4"/></g><g opacity="0.45" transform="translate(1332.0,240.5)"><rect x="-13.5" y="-3" width="27" height="6" fill="#6a5a48" opacity="0.7"/><rect x="-3" y="-13.5" width="6" height="27" fill="#6a5a48" opacity="0.7"/><circle r="6.5" fill="#6a5a48" opacity="0.8"/><circle r="5" fill="#d4d4d4"/><rect x="-12" y="-1.8" width="4" height="3.6" fill="#d4d4d4"/><rect x="8" y="-1.8" width="4" height="3.6" fill="#d4d4d4"/><rect x="-1.8" y="-12" width="3.6" height="4" fill="#d4d4d4"/><rect x="-1.8" y="8" width="3.6" height="4" fill="#d4d4d4"/></g><g opacity="0.55" transform="translate(1332.0,535.9)"><rect x="-13.5" y="-3" width="27" height="6" fill="#6a5a48" opacity="0.7"/><rect x="-3" y="-13.5" width="6" height="27" fill="#6a5a48" opacity="0.7"/><circle r="6.5" fill="#6a5a48" opacity="0.8"/><circle r="5" fill="#d4d4d4"/><rect x="-12" y="-1.8" width="4" height="3.6" fill="#d4d4d4"/><rect x="8" y="-1.8" width="4" height="3.6" fill="#d4d4d4"/><rect x="-1.8" y="-12" width="3.6" height="4" fill="#d4d4d4"/><rect x="-1.8" y="8" width="3.6" height="4" fill="#d4d4d4"/></g><circle cx="797" cy="97.69999999999999" r="8.3" fill="rgba(60,40,30,0.5)"/><circle cx="797" cy="97.69999999999999" r="7.3" fill="#fff"/><circle cx="797" cy="97.69999999999999" r="5.2" fill="#e8403a"/><circle cx="797" cy="336.70000000000005" r="8.3" fill="rgba(60,40,30,0.5)"/><circle cx="797" cy="336.70000000000005" r="7.3" fill="#fff"/><circle cx="797" cy="336.70000000000005" r="5.2" fill="#e8403a"/><circle cx="797" cy="575.8" r="8.3" fill="rgba(60,40,30,0.5)"/><circle cx="797" cy="575.8" r="7.3" fill="#fff"/><circle cx="797" cy="575.8" r="5.2" fill="#e8403a"/><circle cx="1332" cy="97.69999999999999" r="8.3" fill="rgba(60,40,30,0.5)"/><circle cx="1332" cy="97.69999999999999" r="7.3" fill="#fff"/><circle cx="1332" cy="97.69999999999999" r="5.2" fill="#e8403a"/><circle cx="1332" cy="575.8" r="8.3" fill="rgba(60,40,30,0.5)"/><circle cx="1332" cy="575.8" r="7.3" fill="#fff"/><circle cx="1332" cy="575.8" r="5.2" fill="#e8403a"/><circle cx="1866" cy="97.69999999999999" r="8.3" fill="rgba(60,40,30,0.5)"/><circle cx="1866" cy="97.69999999999999" r="7.3" fill="#fff"/><circle cx="1866" cy="97.69999999999999" r="5.2" fill="#e8403a"/><circle cx="1866" cy="336.70000000000005" r="8.3" fill="rgba(60,40,30,0.5)"/><circle cx="1866" cy="336.70000000000005" r="7.3" fill="#fff"/><circle cx="1866" cy="336.70000000000005" r="5.2" fill="#e8403a"/><circle cx="1866" cy="575.8" r="8.3" fill="rgba(60,40,30,0.5)"/><circle cx="1866" cy="575.8" r="7.3" fill="#fff"/><circle cx="1866" cy="575.8" r="5.2" fill="#e8403a"/><path d="M806.8 228.0 L819.3 240.5 L806.8 253.0 L794.3 240.5 Z" fill="#fff" stroke="#000" stroke-width="3.2"/><path d="M872.4 228.0 L884.9 240.5 L872.4 253.0 L859.9 240.5 Z" fill="#fff" stroke="#000" stroke-width="3.2"/><path d="M872.4 96.6 L884.9 109.1 L872.4 121.6 L859.9 109.1 Z" fill="#fff" stroke="#000" stroke-width="3.2"/><path d="M1266.3 96.6 L1278.8 109.1 L1266.3 121.6 L1253.8 109.1 Z" fill="#fff" stroke="#000" stroke-width="3.2"/><path d="M1266.3 228.0 L1278.8 240.5 L1266.3 253.0 L1253.8 240.5 Z" fill="#fff" stroke="#000" stroke-width="3.2"/><path d="M1397.7 228.0 L1410.2 240.5 L1397.7 253.0 L1385.2 240.5 Z" fill="#fff" stroke="#000" stroke-width="3.2"/><path d="M1397.7 96.6 L1410.2 109.1 L1397.7 121.6 L1385.2 109.1 Z" fill="#fff" stroke="#000" stroke-width="3.2"/><path d="M1791.6 96.6 L1804.1 109.1 L1791.6 121.6 L1779.1 109.1 Z" fill="#fff" stroke="#000" stroke-width="3.2"/><path d="M1791.6 228.0 L1804.1 240.5 L1791.6 253.0 L1779.1 240.5 Z" fill="#fff" stroke="#000" stroke-width="3.2"/><path d="M1857.2 228.0 L1869.7 240.5 L1857.2 253.0 L1844.7 240.5 Z" fill="#fff" stroke="#000" stroke-width="3.2"/><path d="M1857.2 556.2 L1869.7 568.7 L1857.2 581.2 L1844.7 568.7 Z" fill="#fff" stroke="#000" stroke-width="3.2"/><path d="M806.8 556.2 L819.3 568.7 L806.8 581.2 L794.3 568.7 Z" fill="#fff" stroke="#000" stroke-width="3.2"/><rect x="0" y="0" width="2421" height="28" fill="rgba(22,22,22,0.74)"/><rect x="0" y="28" width="28" height="680.5" fill="rgba(22,22,22,0.74)"/><rect x="0" y="0" width="2421" height="2" fill="rgba(255,255,255,0.07)"/><rect x="0" y="0" width="28" height="28" fill="#8c8c8c"/><rect x="31.1" y="21" width="2" height="7" fill="#9c9c9c"/><rect x="44.3" y="21" width="2" height="7" fill="#9c9c9c"/><rect x="57.4" y="21" width="2" height="7" fill="#9c9c9c"/><rect x="70.5" y="21" width="2" height="7" fill="#9c9c9c"/><rect x="83.6" y="10" width="2" height="18" fill="#9c9c9c"/><rect x="96.8" y="21" width="2" height="7" fill="#9c9c9c"/><rect x="109.9" y="21" width="2" height="7" fill="#9c9c9c"/><rect x="123.0" y="21" width="2" height="7" fill="#9c9c9c"/><rect x="136.2" y="21" width="2" height="7" fill="#9c9c9c"/><rect x="149.3" y="0" width="2" height="28" fill="#a8a8a8"/><text x="154.3" y="16.5" font-size="14" fill="#dcdcdc" font-family="Liberation Sans" letter-spacing="0.5">- 18</text><rect x="162.4" y="21" width="2" height="7" fill="#9c9c9c"/><rect x="175.6" y="21" width="2" height="7" fill="#9c9c9c"/><rect x="188.7" y="21" width="2" height="7" fill="#9c9c9c"/><rect x="201.8" y="21" width="2" height="7" fill="#9c9c9c"/><rect x="214.9" y="10" width="2" height="18" fill="#9c9c9c"/><rect x="228.1" y="21" width="2" height="7" fill="#9c9c9c"/><rect x="241.2" y="21" width="2" height="7" fill="#9c9c9c"/><rect x="254.3" y="21" width="2" height="7" fill="#9c9c9c"/><rect x="267.5" y="21" width="2" height="7" fill="#9c9c9c"/><rect x="280.6" y="0" width="2" height="28" fill="#a8a8a8"/><text x="285.6" y="16.5" font-size="14" fill="#dcdcdc" font-family="Liberation Sans" letter-spacing="0.5">- 16</text><rect x="293.7" y="21" width="2" height="7" fill="#9c9c9c"/><rect x="306.9" y="21" width="2" height="7" fill="#9c9c9c"/><rect x="320.0" y="21" width="2" height="7" fill="#9c9c9c"/><rect x="333.1" y="21" width="2" height="7" fill="#9c9c9c"/><rect x="346.2" y="10" width="2" height="18" fill="#9c9c9c"/><rect x="359.4" y="21" width="2" height="7" fill="#9c9c9c"/><rect x="372.5" y="21" width="2" height="7" fill="#9c9c9c"/><rect x="385.6" y="21" width="2" height="7" fill="#9c9c9c"/><rect x="398.8" y="21" width="2" height="7" fill="#9c9c9c"/><rect x="411.9" y="0" width="2" height="28" fill="#a8a8a8"/><text x="416.9" y="16.5" font-size="14" fill="#dcdcdc" font-family="Liberation Sans" letter-spacing="0.5">- 14</text><rect x="425.0" y="21" width="2" height="7" fill="#9c9c9c"/><rect x="438.2" y="21" width="2" height="7" fill="#9c9c9c"/><rect x="451.3" y="21" width="2" height="7" fill="#9c9c9c"/><rect x="464.4" y="21" width="2" height="7" fill="#9c9c9c"/><rect x="477.5" y="10" width="2" height="18" fill="#9c9c9c"/><rect x="490.7" y="21" width="2" height="7" fill="#9c9c9c"/><rect x="503.8" y="21" width="2" height="7" fill="#9c9c9c"/><rect x="516.9" y="21" width="2" height="7" fill="#9c9c9c"/><rect x="530.1" y="21" width="2" height="7" fill="#9c9c9c"/><rect x="543.2" y="0" width="2" height="28" fill="#a8a8a8"/><text x="548.2" y="16.5" font-size="14" fill="#dcdcdc" font-family="Liberation Sans" letter-spacing="0.5">- 12</text><rect x="556.3" y="21" width="2" height="7" fill="#9c9c9c"/><rect x="569.5" y="21" width="2" height="7" fill="#9c9c9c"/><rect x="582.6" y="21" width="2" height="7" fill="#9c9c9c"/><rect x="595.7" y="21" width="2" height="7" fill="#9c9c9c"/><rect x="608.8" y="10" width="2" height="18" fill="#9c9c9c"/><rect x="622.0" y="21" width="2" height="7" fill="#9c9c9c"/><rect x="635.1" y="21" width="2" height="7" fill="#9c9c9c"/><rect x="648.2" y="21" width="2" height="7" fill="#9c9c9c"/><rect x="661.4" y="21" width="2" height="7" fill="#9c9c9c"/><rect x="674.5" y="0" width="2" height="28" fill="#a8a8a8"/><text x="679.5" y="16.5" font-size="14" fill="#dcdcdc" font-family="Liberation Sans" letter-spacing="0.5">- 10</text><rect x="687.6" y="21" width="2" height="7" fill="#9c9c9c"/><rect x="700.8" y="21" width="2" height="7" fill="#9c9c9c"/><rect x="713.9" y="21" width="2" height="7" fill="#9c9c9c"/><rect x="727.0" y="21" width="2" height="7" fill="#9c9c9c"/><rect x="740.2" y="10" width="2" height="18" fill="#9c9c9c"/><rect x="753.3" y="21" width="2" height="7" fill="#9c9c9c"/><rect x="766.4" y="21" width="2" height="7" fill="#9c9c9c"/><rect x="779.5" y="21" width="2" height="7" fill="#9c9c9c"/><rect x="792.7" y="21" width="2" height="7" fill="#9c9c9c"/><rect x="805.8" y="0" width="2" height="28" fill="#a8a8a8"/><text x="810.8" y="16.5" font-size="14" fill="#dcdcdc" font-family="Liberation Sans" letter-spacing="0.5">- 8</text><rect x="818.9" y="21" width="2" height="7" fill="#9c9c9c"/><rect x="832.1" y="21" width="2" height="7" fill="#9c9c9c"/><rect x="845.2" y="21" width="2" height="7" fill="#9c9c9c"/><rect x="858.3" y="21" width="2" height="7" fill="#9c9c9c"/><rect x="871.4" y="10" width="2" height="18" fill="#9c9c9c"/><rect x="884.6" y="21" width="2" height="7" fill="#9c9c9c"/><rect x="897.7" y="21" width="2" height="7" fill="#9c9c9c"/><rect x="910.8" y="21" width="2" height="7" fill="#9c9c9c"/><rect x="924.0" y="21" width="2" height="7" fill="#9c9c9c"/><rect x="937.1" y="0" width="2" height="28" fill="#a8a8a8"/><text x="942.1" y="16.5" font-size="14" fill="#dcdcdc" font-family="Liberation Sans" letter-spacing="0.5">- 6</text><rect x="950.2" y="21" width="2" height="7" fill="#9c9c9c"/><rect x="963.4" y="21" width="2" height="7" fill="#9c9c9c"/><rect x="976.5" y="21" width="2" height="7" fill="#9c9c9c"/><rect x="989.6" y="21" width="2" height="7" fill="#9c9c9c"/><rect x="1002.8" y="10" width="2" height="18" fill="#9c9c9c"/><rect x="1015.9" y="21" width="2" height="7" fill="#9c9c9c"/><rect x="1029.0" y="21" width="2" height="7" fill="#9c9c9c"/><rect x="1042.1" y="21" width="2" height="7" fill="#9c9c9c"/><rect x="1055.3" y="21" width="2" height="7" fill="#9c9c9c"/><rect x="1068.4" y="0" width="2" height="28" fill="#a8a8a8"/><text x="1073.4" y="16.5" font-size="14" fill="#dcdcdc" font-family="Liberation Sans" letter-spacing="0.5">- 4</text><rect x="1081.5" y="21" width="2" height="7" fill="#9c9c9c"/><rect x="1094.7" y="21" width="2" height="7" fill="#9c9c9c"/><rect x="1107.8" y="21" width="2" height="7" fill="#9c9c9c"/><rect x="1120.9" y="21" width="2" height="7" fill="#9c9c9c"/><rect x="1134.0" y="10" width="2" height="18" fill="#9c9c9c"/><rect x="1147.2" y="21" width="2" height="7" fill="#9c9c9c"/><rect x="1160.3" y="21" width="2" height="7" fill="#9c9c9c"/><rect x="1173.4" y="21" width="2" height="7" fill="#9c9c9c"/><rect x="1186.6" y="21" width="2" height="7" fill="#9c9c9c"/><rect x="1199.7" y="0" width="2" height="28" fill="#a8a8a8"/><text x="1204.7" y="16.5" font-size="14" fill="#dcdcdc" font-family="Liberation Sans" letter-spacing="0.5">- 2</text><rect x="1212.8" y="21" width="2" height="7" fill="#9c9c9c"/><rect x="1226.0" y="21" width="2" height="7" fill="#9c9c9c"/><rect x="1239.1" y="21" width="2" height="7" fill="#9c9c9c"/><rect x="1252.2" y="21" width="2" height="7" fill="#9c9c9c"/><rect x="1265.3" y="10" width="2" height="18" fill="#9c9c9c"/><rect x="1278.5" y="21" width="2" height="7" fill="#9c9c9c"/><rect x="1291.6" y="21" width="2" height="7" fill="#9c9c9c"/><rect x="1304.7" y="21" width="2" height="7" fill="#9c9c9c"/><rect x="1317.9" y="21" width="2" height="7" fill="#9c9c9c"/><rect x="1331.0" y="0" width="2" height="28" fill="#a8a8a8"/><text x="1336.0" y="16.5" font-size="14" fill="#dcdcdc" font-family="Liberation Sans" letter-spacing="0.5">0</text><rect x="1344.1" y="21" width="2" height="7" fill="#9c9c9c"/><rect x="1357.3" y="21" width="2" height="7" fill="#9c9c9c"/><rect x="1370.4" y="21" width="2" height="7" fill="#9c9c9c"/><rect x="1383.5" y="21" width="2" height="7" fill="#9c9c9c"/><rect x="1396.7" y="10" width="2" height="18" fill="#9c9c9c"/><rect x="1409.8" y="21" width="2" height="7" fill="#9c9c9c"/><rect x="1422.9" y="21" width="2" height="7" fill="#9c9c9c"/><rect x="1436.0" y="21" width="2" height="7" fill="#9c9c9c"/><rect x="1449.2" y="21" width="2" height="7" fill="#9c9c9c"/><rect x="1462.3" y="0" width="2" height="28" fill="#a8a8a8"/><text x="1467.3" y="16.5" font-size="14" fill="#dcdcdc" font-family="Liberation Sans" letter-spacing="0.5">2</text><rect x="1475.4" y="21" width="2" height="7" fill="#9c9c9c"/><rect x="1488.6" y="21" width="2" height="7" fill="#9c9c9c"/><rect x="1501.7" y="21" width="2" height="7" fill="#9c9c9c"/><rect x="1514.8" y="21" width="2" height="7" fill="#9c9c9c"/><rect x="1527.9" y="10" width="2" height="18" fill="#9c9c9c"/><rect x="1541.1" y="21" width="2" height="7" fill="#9c9c9c"/><rect x="1554.2" y="21" width="2" height="7" fill="#9c9c9c"/><rect x="1567.3" y="21" width="2" height="7" fill="#9c9c9c"/><rect x="1580.5" y="21" width="2" height="7" fill="#9c9c9c"/><rect x="1593.6" y="0" width="2" height="28" fill="#a8a8a8"/><text x="1598.6" y="16.5" font-size="14" fill="#dcdcdc" font-family="Liberation Sans" letter-spacing="0.5">4</text><rect x="1606.7" y="21" width="2" height="7" fill="#9c9c9c"/><rect x="1619.9" y="21" width="2" height="7" fill="#9c9c9c"/><rect x="1633.0" y="21" width="2" height="7" fill="#9c9c9c"/><rect x="1646.1" y="21" width="2" height="7" fill="#9c9c9c"/><rect x="1659.2" y="10" width="2" height="18" fill="#9c9c9c"/><rect x="1672.4" y="21" width="2" height="7" fill="#9c9c9c"/><rect x="1685.5" y="21" width="2" height="7" fill="#9c9c9c"/><rect x="1698.6" y="21" width="2" height="7" fill="#9c9c9c"/><rect x="1711.8" y="21" width="2" height="7" fill="#9c9c9c"/><rect x="1724.9" y="0" width="2" height="28" fill="#a8a8a8"/><text x="1729.9" y="16.5" font-size="14" fill="#dcdcdc" font-family="Liberation Sans" letter-spacing="0.5">6</text><rect x="1738.0" y="21" width="2" height="7" fill="#9c9c9c"/><rect x="1751.2" y="21" width="2" height="7" fill="#9c9c9c"/><rect x="1764.3" y="21" width="2" height="7" fill="#9c9c9c"/><rect x="1777.4" y="21" width="2" height="7" fill="#9c9c9c"/><rect x="1790.6" y="10" width="2" height="18" fill="#9c9c9c"/><rect x="1803.7" y="21" width="2" height="7" fill="#9c9c9c"/><rect x="1816.8" y="21" width="2" height="7" fill="#9c9c9c"/><rect x="1829.9" y="21" width="2" height="7" fill="#9c9c9c"/><rect x="1843.1" y="21" width="2" height="7" fill="#9c9c9c"/><rect x="1856.2" y="0" width="2" height="28" fill="#a8a8a8"/><text x="1861.2" y="16.5" font-size="14" fill="#dcdcdc" font-family="Liberation Sans" letter-spacing="0.5">8</text><rect x="1869.3" y="21" width="2" height="7" fill="#9c9c9c"/><rect x="1882.5" y="21" width="2" height="7" fill="#9c9c9c"/><rect x="1895.6" y="21" width="2" height="7" fill="#9c9c9c"/><rect x="1908.7" y="21" width="2" height="7" fill="#9c9c9c"/><rect x="1921.8" y="10" width="2" height="18" fill="#9c9c9c"/><rect x="1935.0" y="21" width="2" height="7" fill="#9c9c9c"/><rect x="1948.1" y="21" width="2" height="7" fill="#9c9c9c"/><rect x="1961.2" y="21" width="2" height="7" fill="#9c9c9c"/><rect x="1974.4" y="21" width="2" height="7" fill="#9c9c9c"/><rect x="1987.5" y="0" width="2" height="28" fill="#a8a8a8"/><text x="1992.5" y="16.5" font-size="14" fill="#dcdcdc" font-family="Liberation Sans" letter-spacing="0.5">10</text><rect x="2000.6" y="21" width="2" height="7" fill="#9c9c9c"/><rect x="2013.8" y="21" width="2" height="7" fill="#9c9c9c"/><rect x="2026.9" y="21" width="2" height="7" fill="#9c9c9c"/><rect x="2040.0" y="21" width="2" height="7" fill="#9c9c9c"/><rect x="2053.2" y="10" width="2" height="18" fill="#9c9c9c"/><rect x="2066.3" y="21" width="2" height="7" fill="#9c9c9c"/><rect x="2079.4" y="21" width="2" height="7" fill="#9c9c9c"/><rect x="2092.5" y="21" width="2" height="7" fill="#9c9c9c"/><rect x="2105.7" y="21" width="2" height="7" fill="#9c9c9c"/><rect x="2118.8" y="0" width="2" height="28" fill="#a8a8a8"/><text x="2123.8" y="16.5" font-size="14" fill="#dcdcdc" font-family="Liberation Sans" letter-spacing="0.5">12</text><rect x="2131.9" y="21" width="2" height="7" fill="#9c9c9c"/><rect x="2145.1" y="21" width="2" height="7" fill="#9c9c9c"/><rect x="2158.2" y="21" width="2" height="7" fill="#9c9c9c"/><rect x="2171.3" y="21" width="2" height="7" fill="#9c9c9c"/><rect x="2184.4" y="10" width="2" height="18" fill="#9c9c9c"/><rect x="2197.6" y="21" width="2" height="7" fill="#9c9c9c"/><rect x="2210.7" y="21" width="2" height="7" fill="#9c9c9c"/><rect x="2223.8" y="21" width="2" height="7" fill="#9c9c9c"/><rect x="2237.0" y="21" width="2" height="7" fill="#9c9c9c"/><rect x="2250.1" y="0" width="2" height="28" fill="#a8a8a8"/><text x="2255.1" y="16.5" font-size="14" fill="#dcdcdc" font-family="Liberation Sans" letter-spacing="0.5">14</text><rect x="2263.2" y="21" width="2" height="7" fill="#9c9c9c"/><rect x="2276.4" y="21" width="2" height="7" fill="#9c9c9c"/><rect x="2289.5" y="21" width="2" height="7" fill="#9c9c9c"/><rect x="2302.6" y="21" width="2" height="7" fill="#9c9c9c"/><rect x="2315.8" y="10" width="2" height="18" fill="#9c9c9c"/><rect x="2328.9" y="21" width="2" height="7" fill="#9c9c9c"/><rect x="2342.0" y="21" width="2" height="7" fill="#9c9c9c"/><rect x="2355.1" y="21" width="2" height="7" fill="#9c9c9c"/><rect x="2368.3" y="21" width="2" height="7" fill="#9c9c9c"/><rect x="2381.4" y="0" width="2" height="28" fill="#a8a8a8"/><text x="2386.4" y="16.5" font-size="14" fill="#dcdcdc" font-family="Liberation Sans" letter-spacing="0.5">16</text><rect x="2394.5" y="21" width="2" height="7" fill="#9c9c9c"/><rect x="2407.7" y="21" width="2" height="7" fill="#9c9c9c"/><rect x="21" y="29.4" width="7" height="2" fill="#9c9c9c"/><rect x="0" y="42.5" width="28" height="2" fill="#a8a8a8"/><text transform="translate(17,39.5) rotate(-90)" font-size="14.5" fill="#dcdcdc" font-family="Liberation Sans" letter-spacing="1">0</text><rect x="21" y="55.6" width="7" height="2" fill="#9c9c9c"/><rect x="21" y="68.8" width="7" height="2" fill="#9c9c9c"/><rect x="21" y="81.9" width="7" height="2" fill="#9c9c9c"/><rect x="21" y="95.0" width="7" height="2" fill="#9c9c9c"/><rect x="10" y="108.1" width="18" height="2" fill="#9c9c9c"/><rect x="21" y="121.3" width="7" height="2" fill="#9c9c9c"/><rect x="21" y="134.4" width="7" height="2" fill="#9c9c9c"/><rect x="21" y="147.5" width="7" height="2" fill="#9c9c9c"/><rect x="21" y="160.7" width="7" height="2" fill="#9c9c9c"/><rect x="0" y="173.8" width="28" height="2" fill="#a8a8a8"/><text transform="translate(17,170.8) rotate(-90)" font-size="14.5" fill="#dcdcdc" font-family="Liberation Sans" letter-spacing="1">2</text><rect x="21" y="186.9" width="7" height="2" fill="#9c9c9c"/><rect x="21" y="200.1" width="7" height="2" fill="#9c9c9c"/><rect x="21" y="213.2" width="7" height="2" fill="#9c9c9c"/><rect x="21" y="226.3" width="7" height="2" fill="#9c9c9c"/><rect x="10" y="239.5" width="18" height="2" fill="#9c9c9c"/><rect x="21" y="252.6" width="7" height="2" fill="#9c9c9c"/><rect x="21" y="265.7" width="7" height="2" fill="#9c9c9c"/><rect x="21" y="278.8" width="7" height="2" fill="#9c9c9c"/><rect x="21" y="292.0" width="7" height="2" fill="#9c9c9c"/><rect x="0" y="305.1" width="28" height="2" fill="#a8a8a8"/><text transform="translate(17,302.1) rotate(-90)" font-size="14.5" fill="#dcdcdc" font-family="Liberation Sans" letter-spacing="1">4</text><rect x="21" y="318.2" width="7" height="2" fill="#9c9c9c"/><rect x="21" y="331.4" width="7" height="2" fill="#9c9c9c"/><rect x="21" y="344.5" width="7" height="2" fill="#9c9c9c"/><rect x="21" y="357.6" width="7" height="2" fill="#9c9c9c"/><rect x="10" y="370.8" width="18" height="2" fill="#9c9c9c"/><rect x="21" y="383.9" width="7" height="2" fill="#9c9c9c"/><rect x="21" y="397.0" width="7" height="2" fill="#9c9c9c"/><rect x="21" y="410.1" width="7" height="2" fill="#9c9c9c"/><rect x="21" y="423.3" width="7" height="2" fill="#9c9c9c"/><rect x="0" y="436.4" width="28" height="2" fill="#a8a8a8"/><text transform="translate(17,433.4) rotate(-90)" font-size="14.5" fill="#dcdcdc" font-family="Liberation Sans" letter-spacing="1">6</text><rect x="21" y="449.5" width="7" height="2" fill="#9c9c9c"/><rect x="21" y="462.7" width="7" height="2" fill="#9c9c9c"/><rect x="21" y="475.8" width="7" height="2" fill="#9c9c9c"/><rect x="21" y="488.9" width="7" height="2" fill="#9c9c9c"/><rect x="10" y="502.1" width="18" height="2" fill="#9c9c9c"/><rect x="21" y="515.2" width="7" height="2" fill="#9c9c9c"/><rect x="21" y="528.3" width="7" height="2" fill="#9c9c9c"/><rect x="21" y="541.4" width="7" height="2" fill="#9c9c9c"/><rect x="21" y="554.6" width="7" height="2" fill="#9c9c9c"/><rect x="0" y="567.7" width="28" height="2" fill="#a8a8a8"/><text transform="translate(17,564.7) rotate(-90)" font-size="14.5" fill="#dcdcdc" font-family="Liberation Sans" letter-spacing="1">8</text><rect x="21" y="580.8" width="7" height="2" fill="#9c9c9c"/><rect x="21" y="594.0" width="7" height="2" fill="#9c9c9c"/><rect x="21" y="607.1" width="7" height="2" fill="#9c9c9c"/><rect x="21" y="620.2" width="7" height="2" fill="#9c9c9c"/><rect x="10" y="633.4" width="18" height="2" fill="#9c9c9c"/><rect x="21" y="646.5" width="7" height="2" fill="#9c9c9c"/><rect x="21" y="659.6" width="7" height="2" fill="#9c9c9c"/><rect x="21" y="672.7" width="7" height="2" fill="#9c9c9c"/><rect x="21" y="685.9" width="7" height="2" fill="#9c9c9c"/><rect x="0" y="699.0" width="28" height="2" fill="#a8a8a8"/><text transform="translate(17,696.0) rotate(-90)" font-size="14.5" fill="#dcdcdc" font-family="Liberation Sans" letter-spacing="1">10</text><rect x="612" y="692" width="611" height="8" rx="4" fill="#7a7a7a"/><rect x="2404" y="189" width="9.5" height="180" rx="4.7" fill="#7a7a7a"/></svg><svg class="a" style="left:660.0px;top:324.5px;" width="30" height="30" viewBox="0 0 16 16"><path d="M5.5 1.5L8 4l2.5-2.5M5.5 14.5L8 12l2.5 2.5M1.5 5.5L4 8l-2.5 2.5M14.5 5.5L12 8l2.5 2.5" stroke="#dcdcdc" stroke-width="1.5" fill="none"/><rect x="6.3" y="6.3" width="3.4" height="3.4" fill="#dcdcdc"/></svg><svg class="a" style="left:721.4px;top:323.5px;" width="32" height="32" viewBox="0 0 16 16"><circle cx="8" cy="8" r="7" fill="#dcdcdc"/><rect x="4" y="7" width="8" height="2" fill="#4d4d4d"/></svg><div class="t" style="left:781px;top:319.5px;font-size:25px;color:#f4f4f4;text-shadow:0 1px 2px rgba(0,0,0,0.5);letter-spacing:0.6px;">3753.0 %</div><svg class="a" style="left:919.5px;top:323.5px;" width="32" height="32" viewBox="0 0 16 16"><circle cx="8" cy="8" r="7" fill="#dcdcdc"/><rect x="4" y="7" width="8" height="2" fill="#4d4d4d"/><rect x="7" y="4" width="2" height="8" fill="#4d4d4d"/></svg>
<div class="a" style="left:614px;top:993px;width:2421px;height:1225px;background:#282828;border-radius:8px;"></div><div class="a" style="left:621.4px;top:1004.4px;width:96.8px;height:56px;background:#4a4a4a;border-radius:8px;"></div><div class="t" style="left:635px;top:1012px;font-size:25px;color:#e4e4e4;">Points</div><div class="a" style="left:726.4px;top:1004.4px;width:132.2px;height:56px;background:#3c3c3c;border-radius:8px;"></div><div class="t" style="left:740.4px;top:1012px;font-size:25px;color:#d4d4d4;">Polygons</div><div class="a" style="left:866px;top:1004.4px;width:61.7px;height:56px;background:#3c3c3c;border-radius:8px;"></div><div class="t" style="left:881px;top:1012px;font-size:25px;color:#d4d4d4;">UV</div><div class="a" style="left:935.5px;top:1004.4px;width:97.9px;height:56px;background:#3c3c3c;border-radius:8px;"></div><div class="t" style="left:950px;top:1012px;font-size:25px;color:#d4d4d4;">Bones</div><div class="a" style="left:1046.3px;top:1011px;width:3px;height:42px;background:#161616;border-radius:1px;"></div><svg class="a" style="left:1069.8px;top:1016.0px;" width="32" height="32" viewBox="0 0 16 16"><path d="M6 2.5h4v8.5L8 14l-2-3z" fill="#d8d8d8"/><rect x="6" y="4.5" width="4" height="1.2" fill="#282828"/></svg><svg class="a" style="left:1123.4px;top:1016.0px;" width="32" height="32" viewBox="0 0 16 16"><g transform="translate(-2 0)"><path d="M6 2.5h4v8.5L8 14l-2-3z" fill="#d8d8d8"/><rect x="6" y="4.5" width="4" height="1.2" fill="#282828"/></g><circle cx="12.5" cy="12.5" r="2" fill="#d8d8d8"/></svg><svg class="a" style="left:1178.8px;top:1016.0px;" width="32" height="32" viewBox="0 0 16 16"><path d="M2 2l7 7M9 2L2 9" stroke="#d8d8d8" stroke-width="1.5"/><circle cx="12" cy="12" r="2.2" fill="#d8d8d8"/></svg><div class="a" style="left:1230px;top:1004.4px;width:49px;height:56px;background:#3c3c3c;border-radius:8px;"></div><svg class="a" style="left:1238.5px;top:1016.0px;" width="32" height="32" viewBox="0 0 16 16"><path d="M3 2.5l10 4-4.2 1.3 3.8 3.8-1.4 1.4-3.8-3.8L6.2 13z" fill="#6b9bf5"/></svg><svg class="a" style="left:1294.0px;top:1016.0px;" width="32" height="32" viewBox="0 0 16 16"><path d="M6.3 4.9L8 2.9 9.7 4.9M6.3 11.1L8 13.1 9.7 11.1M4.9 6.3L2.9 8 4.9 9.7M11.1 6.3L13.1 8 11.1 9.7" stroke="#d8d8d8" stroke-width="1.9" fill="none" stroke-linecap="butt" stroke-linejoin="round"/><circle cx="8" cy="8" r="1.9" fill="#d8d8d8"/></svg><svg class="a" style="left:1349.5px;top:1016.0px;" width="32" height="32" viewBox="0 0 16 16"><path d="M3.6 11.2A5.6 5.6 0 1 1 11.9 12.2" stroke="#d8d8d8" stroke-width="1.9" fill="none"/><path d="M2 10.2L6.9 14.2 2.4 14.2z" fill="#d8d8d8" stroke="#d8d8d8" stroke-width=".9" stroke-linejoin="round"/><circle cx="8" cy="8" r="1.8" fill="#d8d8d8"/></svg><svg class="a" style="left:1406.0px;top:1016.0px;" width="32" height="32" viewBox="0 0 16 16"><path d="M9.2 1.6H14.4V6.8L12.6 5 10.8 6.8 9.2 5.2 11 3.4z" fill="#d8d8d8" stroke="#d8d8d8" stroke-width=".6" stroke-linejoin="round"/><path d="M6.8 14.4H1.6V9.2L3.4 11 5.2 9.2 6.8 10.8 5 12.6z" fill="#d8d8d8" stroke="#d8d8d8" stroke-width=".6" stroke-linejoin="round"/><circle cx="8" cy="8" r="1.8" fill="#d8d8d8"/></svg><div class="t" style="left:2722px;top:1012px;font-size:25px;color:#dcdcdc;">Edit</div><div class="a" style="left:2787.3px;top:1011px;width:3px;height:42px;background:#161616;border-radius:1px;"></div><svg class="a" style="left:2811.0px;top:1017.0px;" width="30" height="30" viewBox="0 0 16 16"><path d="M1 3.5h14M1 8.5h6M1 13.5h6M3.5 1v14M8.5 1v6M13 1v6" stroke="#d8d8d8" stroke-width="1.2"/><path d="M9 15v-3.5a2.5 2.5 0 0 1 5 0V15" stroke="#aaaaaa" stroke-width="2.2" fill="none"/></svg><div class="t" style="left:2849px;top:1012px;font-size:25px;color:#dcdcdc;">Snap</div><svg class="a" style="left:2933.0px;top:1017.0px;" width="30" height="30" viewBox="0 0 16 16"><rect x="1.5" y="1.5" width="13" height="13" fill="#d8d8d8"/><rect x="3.3" y="3.3" width="1.8" height="1.8" fill="#282828"/><rect x="3.3" y="7.0" width="1.8" height="1.8" fill="#282828"/><rect x="3.3" y="10.7" width="1.8" height="1.8" fill="#282828"/><rect x="7.0" y="3.3" width="1.8" height="1.8" fill="#282828"/><rect x="7.0" y="7.0" width="1.8" height="1.8" fill="#282828"/><rect x="7.0" y="10.7" width="1.8" height="1.8" fill="#282828"/><rect x="10.7" y="3.3" width="1.8" height="1.8" fill="#282828"/><rect x="10.7" y="7.0" width="1.8" height="1.8" fill="#282828"/><rect x="10.7" y="10.7" width="1.8" height="1.8" fill="#282828"/></svg><div class="t" style="left:2970px;top:1012px;font-size:25px;color:#dcdcdc;">Grid</div><div class="a" style="left:621.4px;top:1068.2px;width:2406.3px;height:1079px;background:#1c1c1c;border-radius:8px;"></div><svg class="a" style="left:635.7px;top:1083.0px;" width="32" height="32" viewBox="0 0 16 16"><circle cx="8" cy="8" r="7" fill="#dcdcdc"/><rect x="4" y="7" width="8" height="2" fill="#1c1c1c"/></svg><div class="t" style="left:695.3px;top:1079px;font-size:25px;color:#f0f0f0;letter-spacing:0.6px;">1396.0 %</div><svg class="a" style="left:833.7px;top:1083.0px;" width="32" height="32" viewBox="0 0 16 16"><circle cx="8" cy="8" r="7" fill="#dcdcdc"/><rect x="4" y="7" width="8" height="2" fill="#1c1c1c"/><rect x="7" y="4" width="2" height="8" fill="#1c1c1c"/></svg><svg class="a" style="left:0;top:0" width="3824" height="2374"><path d="M1691.9 1502.7 L1710.8 1502.7 L1710.8 1451.6 L1824.9 1451.6 L1824.9 1502.7 L1863 1502.7 L1863 1451.6 L1977.9 1451.6 L1977.9 1502.7 L1996.8 1502.7 L1996.8 1629.6 L1691.9 1629.6 Z" fill="none" stroke="#e48b82" stroke-width="2.2"/><path d="M1691.9 1491.2 L1703.4 1502.7 L1691.9 1514.2 L1680.4 1502.7 Z" fill="#fff" stroke="#000" stroke-width="3"/><path d="M1710.8 1491.2 L1722.3 1502.7 L1710.8 1514.2 L1699.3 1502.7 Z" fill="#fff" stroke="#000" stroke-width="3"/><path d="M1710.8 1440.1 L1722.3 1451.6 L1710.8 1463.1 L1699.3 1451.6 Z" fill="#fff" stroke="#000" stroke-width="3"/><path d="M1824.9 1440.1 L1836.4 1451.6 L1824.9 1463.1 L1813.4 1451.6 Z" fill="#fff" stroke="#000" stroke-width="3"/><path d="M1824.9 1491.2 L1836.4 1502.7 L1824.9 1514.2 L1813.4 1502.7 Z" fill="#fff" stroke="#000" stroke-width="3"/><path d="M1863 1491.2 L1874.5 1502.7 L1863 1514.2 L1851.5 1502.7 Z" fill="#fff" stroke="#000" stroke-width="3"/><path d="M1863 1440.1 L1874.5 1451.6 L1863 1463.1 L1851.5 1451.6 Z" fill="#fff" stroke="#000" stroke-width="3"/><path d="M1977.9 1440.1 L1989.4 1451.6 L1977.9 1463.1 L1966.4 1451.6 Z" fill="#fff" stroke="#000" stroke-width="3"/><path d="M1977.9 1491.2 L1989.4 1502.7 L1977.9 1514.2 L1966.4 1502.7 Z" fill="#fff" stroke="#000" stroke-width="3"/><path d="M1996.8 1491.2 L2008.3 1502.7 L1996.8 1514.2 L1985.3 1502.7 Z" fill="#fff" stroke="#000" stroke-width="3"/><path d="M1996.8 1618.1 L2008.3 1629.6 L1996.8 1641.1 L1985.3 1629.6 Z" fill="#fff" stroke="#000" stroke-width="3"/><path d="M1691.9 1618.1 L1703.4 1629.6 L1691.9 1641.1 L1680.4 1629.6 Z" fill="#fff" stroke="#000" stroke-width="3"/></svg><div class="a" style="left:3011px;top:1523px;width:10px;height:422px;background:#505050;border-radius:5px;"></div><div class="a" style="left:1469px;top:2132px;width:1007px;height:8px;background:#505050;border-radius:4px;"></div><div class="a" style="left:634.4px;top:2177.5px;width:14px;height:14px;background:#b9553e;border-radius:7px;"></div><div class="t" style="left:653px;top:2163px;font-size:25px;color:#d8d8d8;">Output</div><div class="a" style="left:764.4px;top:2177.5px;width:14px;height:14px;background:#b9553e;border-radius:7px;"></div><div class="t" style="left:783px;top:2163px;font-size:25px;color:#e8806a;">Debugger (1)</div><div class="t" style="left:972.4px;top:2163px;font-size:25px;color:#d4d4d4;">Audio</div><div class="t" style="left:1073.7px;top:2163px;font-size:25px;color:#d4d4d4;">Animation</div><div class="t" style="left:1221.5px;top:2163px;font-size:25px;color:#d4d4d4;">Shader Editor</div><div class="a" style="left:1395.3px;top:2155px;width:119px;height:56px;background:#3d3d3d;border-radius:8px;"></div><div class="t" style="left:1409px;top:2163px;font-size:25px;color:#e4e4e4;">Polygon</div><svg class="a" style="left:2646.0px;top:2168.0px;" width="30" height="30" viewBox="0 0 16 16"><circle cx="8" cy="2.4" r="1.75" fill="#8a8a8a"/><circle cx="8" cy="8" r="1.75" fill="#8a8a8a"/><circle cx="8" cy="13.6" r="1.75" fill="#8a8a8a"/></svg><div class="a" style="left:2688px;top:2164px;width:3px;height:40px;background:#161616;border-radius:1px;"></div><svg class="a" style="left:2713.0px;top:2168.0px;" width="30" height="30" viewBox="0 0 16 16"><path d="M3 12h10l-1.5-2V6.5a3.5 3.5 0 0 0-7 0V10z" fill="#5a5a5a"/><circle cx="8" cy="13.5" r="1.5" fill="#5a5a5a"/></svg><div class="t" style="left:2761.5px;top:2163px;font-size:25px;color:#9c9c9c;">4.6.1.stable</div><svg class="a" style="left:2922.0px;top:2168.0px;" width="30" height="30" viewBox="0 0 16 16"><path d="M5 1.5h6v1.5l-1 1v4l2 2v1.5H4V10l2-2V4l-1-1z" fill="#d8d8d8"/><path d="M8 11.5v4" stroke="#d8d8d8" stroke-width="1.5"/></svg><svg class="a" style="left:2985.0px;top:2168.0px;" width="30" height="30" viewBox="0 0 16 16"><path d="M1.5 2h13" stroke="#d8d8d8" stroke-width="2"/><path d="M4.5 4l-3 4h6zM11.5 4l-3 4h6z" fill="#d8d8d8"/><path d="M4.5 7v7M11.5 7v7" stroke="#d8d8d8" stroke-width="2"/></svg>
<div class="a" style="left:3040.4px;top:152px;width:166px;height:60px;background:#282828;border-radius:8px 8px 0 0;"></div><div class="a" style="left:3040px;top:208.5px;width:664.5px;height:2009.5px;background:#282828;border-radius:0 0 24px 8px;"></div><div class="t" style="left:3068px;top:160px;font-size:25px;color:#e2e2e2;">Inspector</div><div class="t" style="left:3236px;top:160px;font-size:25px;color:#bcbcbc;">Signals</div><div class="t" style="left:3374px;top:160px;font-size:25px;color:#bcbcbc;">Groups</div><svg class="a" style="left:3675.0px;top:165.0px;" width="30" height="30" viewBox="0 0 16 16"><circle cx="8" cy="2.4" r="1.75" fill="#8a8a8a"/><circle cx="8" cy="8" r="1.75" fill="#8a8a8a"/><circle cx="8" cy="13.6" r="1.75" fill="#8a8a8a"/></svg><svg class="a" style="left:3060.3px;top:226.3px;" width="30" height="30" viewBox="0 0 16 16"><path d="M2 1h7l4 4v10H2z" fill="#d8d8d8"/><path d="M9 1v4h4" fill="#9a9a9a"/><path d="M12 9v6M9 12h6" stroke="#5fd35f" stroke-width="2.2"/></svg><svg class="a" style="left:3115.3px;top:226.3px;" width="30" height="30" viewBox="0 0 16 16"><path d="M1 3h5l1.5 1.5H14V6H4l-2 7H1z" fill="#d8d8d8"/><path d="M4 7h11l-2.5 7H1.5z" fill="#d8d8d8"/></svg><svg class="a" style="left:3171.4px;top:226.3px;" width="30" height="30" viewBox="0 0 16 16"><path d="M1.5 1.5h10.5l2.5 2.5v10.5h-13z" fill="#8a8a8a"/><rect x="4" y="1.5" width="6" height="4" fill="#282828"/><circle cx="8" cy="10" r="2" fill="#282828"/></svg><svg class="a" style="left:3227.6px;top:226.3px;" width="30" height="30" viewBox="0 0 16 16"><circle cx="8" cy="2.4" r="1.75" fill="#d8d8d8"/><circle cx="8" cy="8" r="1.75" fill="#d8d8d8"/><circle cx="8" cy="13.6" r="1.75" fill="#d8d8d8"/></svg><svg class="a" style="left:3564.0px;top:226.3px;" width="30" height="30" viewBox="0 0 16 16"><path d="M10 2L5.5 8l4.5 6" stroke="#d8d8d8" stroke-width="1.8" fill="none" stroke-linecap="round"/></svg><svg class="a" style="left:3605.0px;top:226.3px;" width="30" height="30" viewBox="0 0 16 16"><path d="M6 2l4.5 6L6 14" stroke="#8a8a8a" stroke-width="1.8" fill="none" stroke-linecap="round"/></svg><svg class="a" style="left:3655.0px;top:226.3px;" width="30" height="30" viewBox="0 0 16 16"><path d="M3.5 6A5.5 5.5 0 1 1 4.5 12" stroke="#d8d8d8" stroke-width="2" fill="none"/><path d="M0.5 5.5h6l-3 3.8z" fill="#d8d8d8"/><path d="M9 5v3.5l2.5 1.5" stroke="#d8d8d8" stroke-width="1.6" fill="none"/></svg><div class="a" style="left:3051.7px;top:269.8px;width:587px;height:55px;background:#3f3f3f;border-radius:8px;"></div><svg class="a" style="left:3063.0px;top:281.0px;" width="32" height="32" viewBox="0 0 16 16"><path d="M1.6 1.8h12.8L9 8l5.4 6.2H1.6z" fill="#7596f5" stroke="#7596f5" stroke-width=".6" stroke-linejoin="round"/></svg><div class="t" style="left:3114.3px;top:277px;font-size:25px;color:#e8e8e8;">Polygon2D</div><svg class="a" style="left:3595.5px;top:282.0px;" width="30" height="30" viewBox="0 0 16 16"><path d="M4.5 6.5L8 10l3.5-3.5" stroke="#e0e0e0" stroke-width="2" fill="none" stroke-linecap="round" stroke-linejoin="round"/></svg><svg class="a" style="left:3654.3px;top:282.0px;" width="30" height="30" viewBox="0 0 16 16"><circle cx="9" cy="4.5" r="2.8" stroke="#d8d8d8" stroke-width="1.8" fill="none"/><path d="M7 6.5L4.5 9" stroke="#d8d8d8" stroke-width="1.8"/><text x="8" y="15.5" font-size="6" font-weight="bold" text-anchor="middle" fill="#d8d8d8" font-family="Liberation Sans">DOC</text></svg><div class="a" style="left:3051.7px;top:333px;width:587px;height:49.5px;background:#1c1c1c;border-radius:8px;"></div><div class="t" style="left:3065.8px;top:337.8px;font-size:25px;color:#7c7c7c;">Filter Properties</div><svg class="a" style="left:3594.4px;top:342.8px;" width="30" height="30" viewBox="0 0 16 16"><circle cx="6.5" cy="6.5" r="4" stroke="#e0e0e0" stroke-width="2" fill="none"/><path d="M9.5 9.5l4 4" stroke="#e0e0e0" stroke-width="2.2" stroke-linecap="round"/></svg><svg class="a" style="left:3654.3px;top:342.8px;" width="30" height="30" viewBox="0 0 16 16"><path d="M4 1v5a2 2 0 0 0 2 2v7" stroke="#d8d8d8" stroke-width="0" /><path d="M2.5 1.5v3.5l1.5 1.5 1.5-1.5V1.5M4 6.5v8" stroke="#d8d8d8" stroke-width="2" fill="none"/><path d="M11 1a2.5 2.5 0 0 0-1 4.8V15h2V5.8A2.5 2.5 0 0 0 11 1z" fill="#d8d8d8"/></svg><div class="a" style="left:3051.2px;top:400.4px;width:618.5px;height:52.4px;background:#3a3a3a;border-radius:8px;"></div><svg class="a" style="left:3274.6px;top:411.6px;" width="32" height="32" viewBox="0 0 16 16"><path d="M1.6 1.8h12.8L9 8l5.4 6.2H1.6z" fill="#7596f5" stroke="#7596f5" stroke-width=".6" stroke-linejoin="round"/></svg><div class="t" style="left:3315.5px;top:407.6px;font-size:25px;color:#e0e0e0;font-weight:bold;">Polygon2D</div><div class="a" style="left:3678.7px;top:401px;width:9.2px;height:1155px;background:#5a5a5a;border-radius:4.6px;"></div><div class="t" style="left:3066px;top:462px;font-size:25px;color:#d4d4d4;">Color</div><div class="a" style="left:3361.4px;top:460.2px;width:308.3px;height:48.7px;background:#1c1c1c;border-radius:8px;"></div><div class="a" style="left:3374.8px;top:467px;width:281.2px;height:35.7px;background:#ffffff;"></div><div class="t" style="left:3066px;top:544px;font-size:25px;color:#d4d4d4;">Offset</div><div class="a" style="left:3361.4px;top:514px;width:308.3px;height:105.4px;background:#1c1c1c;border-radius:8px;"></div><div class="t" style="left:3381.3px;top:516.7px;font-size:25px;color:#b35a62;">x</div><div class="t" style="left:3410.5px;top:516.7px;font-size:25px;color:#e6e6e6;">0.0</div><div class="t" style="left:3381.3px;top:573.3px;font-size:25px;color:#8ba055;">y</div><div class="t" style="left:3410.5px;top:573.3px;font-size:25px;color:#e6e6e6;">0.0</div><div class="t" style="left:3066px;top:627.7px;font-size:25px;color:#d4d4d4;">Antialiased</div><div class="a" style="left:3361.4px;top:623.6px;width:308.3px;height:48.2px;background:#1c1c1c;border-radius:8px;"></div><div class="a" style="left:3373.3px;top:636.4px;width:24.4px;height:23.6px;background:#444444;border-radius:4px;"></div><div class="t" style="left:3414px;top:627.7px;font-size:25px;color:#e6e6e6;">On</div><svg class="a" style="left:3051.4px;top:680.5px;" width="28" height="28" viewBox="0 0 16 16"><path d="M4.5 6.5L8 10l3.5-3.5" stroke="#8c8c8c" stroke-width="2" fill="none" stroke-linecap="round" stroke-linejoin="round"/></svg><div class="t" style="left:3083.8px;top:674.5px;font-size:25px;color:#e0e0e0;font-weight:bold;">Texture</div><div class="a" style="left:3072px;top:715px;width:598px;height:1166px;background:#42609a;border-radius:8px;"></div><div class="a" style="left:3075px;top:830px;width:592px;height:1048px;background:#1f232b;border-radius:0 0 6px 6px;"></div><div class="a" style="left:3079px;top:833px;width:584px;height:449px;background:#181a1f;"></div><div class="t" style="left:3087px;top:750px;font-size:25px;color:#f2f2f2;">Texture</div><svg class="a" style="left:3326.5px;top:755.0px;" width="30" height="30" viewBox="0 0 16 16"><path d="M4.2 6A4.5 4.5 0 1 1 5 12" stroke="#e8e8e8" stroke-width="2" fill="none"/><path d="M1.5 5.5h5.2L4 9.5z" fill="#e8e8e8"/></svg><div class="a" style="left:3371.4px;top:715px;width:298.1px;height:111px;background:#1c1c1c;border-radius:8px;"></div><svg class="a" style="left:3384.3px;top:755.0px;" width="30" height="30" viewBox="0 0 16 16"><path d="M1.5 3.5l4-2v11l-4 2zM6.5 1.5l3 2v11l-3-2zM10.5 3.5l4-2v11l-4 2z" fill="#6b9bf5"/></svg><svg class="a" style="left:3420.2px;top:727px" width="202.7" height="87.5" viewBox="0 0 202.7 87.5" shape-rendering="crispEdges"><rect x="0.00" y="0.00" width="13.07" height="12.90" fill="#8c9257"/><rect x="12.67" y="0.00" width="13.07" height="12.90" fill="#34333f"/><rect x="25.34" y="0.00" width="13.07" height="12.90" fill="#34333f"/><rect x="38.01" y="0.00" width="13.07" height="12.90" fill="#34333f"/><rect x="50.67" y="0.00" width="13.07" height="12.90" fill="#34333f"/><rect x="63.34" y="0.00" width="13.07" height="12.90" fill="#34333f"/><rect x="76.01" y="0.00" width="13.07" height="12.90" fill="#34333f"/><rect x="88.68" y="0.00" width="13.07" height="12.90" fill="#8c9257"/><rect x="101.35" y="0.00" width="13.07" height="12.90" fill="#8c9257"/><rect x="114.02" y="0.00" width="13.07" height="12.90" fill="#34333f"/><rect x="126.69" y="0.00" width="13.07" height="12.90" fill="#34333f"/><rect x="139.36" y="0.00" width="13.07" height="12.90" fill="#34333f"/><rect x="152.02" y="0.00" width="13.07" height="12.90" fill="#34333f"/><rect x="164.69" y="0.00" width="13.07" height="12.90" fill="#34333f"/><rect x="177.36" y="0.00" width="13.07" height="12.90" fill="#34333f"/><rect x="190.03" y="0.00" width="13.07" height="12.90" fill="#8c9257"/><rect x="0.00" y="12.50" width="13.07" height="12.90" fill="#8c9257"/><rect x="12.67" y="12.50" width="13.07" height="12.90" fill="#34333f"/><rect x="25.34" y="12.50" width="13.07" height="12.90" fill="#b9a55f"/><rect x="38.01" y="12.50" width="13.07" height="12.90" fill="#b9a55f"/><rect x="50.67" y="12.50" width="13.07" height="12.90" fill="#b9a55f"/><rect x="63.34" y="12.50" width="13.07" height="12.90" fill="#b9a55f"/><rect x="76.01" y="12.50" width="13.07" height="12.90" fill="#34333f"/><rect x="88.68" y="12.50" width="13.07" height="12.90" fill="#8c9257"/><rect x="101.35" y="12.50" width="13.07" height="12.90" fill="#8c9257"/><rect x="114.02" y="12.50" width="13.07" height="12.90" fill="#34333f"/><rect x="126.69" y="12.50" width="13.07" height="12.90" fill="#b9a55f"/><rect x="139.36" y="12.50" width="13.07" height="12.90" fill="#b9a55f"/><rect x="152.02" y="12.50" width="13.07" height="12.90" fill="#b9a55f"/><rect x="164.69" y="12.50" width="13.07" height="12.90" fill="#b9a55f"/><rect x="177.36" y="12.50" width="13.07" height="12.90" fill="#34333f"/><rect x="190.03" y="12.50" width="13.07" height="12.90" fill="#8c9257"/><rect x="0.00" y="25.00" width="13.07" height="12.90" fill="#34333f"/><rect x="12.67" y="25.00" width="13.07" height="12.90" fill="#34333f"/><rect x="25.34" y="25.00" width="13.07" height="12.90" fill="#b9a55f"/><rect x="38.01" y="25.00" width="13.07" height="12.90" fill="#8c9257"/><rect x="50.67" y="25.00" width="13.07" height="12.90" fill="#8c9257"/><rect x="63.34" y="25.00" width="13.07" height="12.90" fill="#b9a55f"/><rect x="76.01" y="25.00" width="13.07" height="12.90" fill="#34333f"/><rect x="88.68" y="25.00" width="13.07" height="12.90" fill="#34333f"/><rect x="101.35" y="25.00" width="13.07" height="12.90" fill="#34333f"/><rect x="114.02" y="25.00" width="13.07" height="12.90" fill="#34333f"/><rect x="126.69" y="25.00" width="13.07" height="12.90" fill="#b9a55f"/><rect x="139.36" y="25.00" width="13.07" height="12.90" fill="#8c9257"/><rect x="152.02" y="25.00" width="13.07" height="12.90" fill="#8c9257"/><rect x="164.69" y="25.00" width="13.07" height="12.90" fill="#b9a55f"/><rect x="177.36" y="25.00" width="13.07" height="12.90" fill="#34333f"/><rect x="190.03" y="25.00" width="13.07" height="12.90" fill="#34333f"/><rect x="0.00" y="37.50" width="13.07" height="12.90" fill="#b9a55f"/><rect x="12.67" y="37.50" width="13.07" height="12.90" fill="#b9a55f"/><rect x="25.34" y="37.50" width="13.07" height="12.90" fill="#b9a55f"/><rect x="38.01" y="37.50" width="13.07" height="12.90" fill="#8c9257"/><rect x="50.67" y="37.50" width="13.07" height="12.90" fill="#8c9257"/><rect x="63.34" y="37.50" width="13.07" height="12.90" fill="#b9a55f"/><rect x="76.01" y="37.50" width="13.07" height="12.90" fill="#b9a55f"/><rect x="88.68" y="37.50" width="13.07" height="12.90" fill="#b9a55f"/><rect x="101.35" y="37.50" width="13.07" height="12.90" fill="#b9a55f"/><rect x="114.02" y="37.50" width="13.07" height="12.90" fill="#b9a55f"/><rect x="126.69" y="37.50" width="13.07" height="12.90" fill="#b9a55f"/><rect x="139.36" y="37.50" width="13.07" height="12.90" fill="#8c9257"/><rect x="152.02" y="37.50" width="13.07" height="12.90" fill="#8c9257"/><rect x="164.69" y="37.50" width="13.07" height="12.90" fill="#b9a55f"/><rect x="177.36" y="37.50" width="13.07" height="12.90" fill="#b9a55f"/><rect x="190.03" y="37.50" width="13.07" height="12.90" fill="#b9a55f"/><rect x="0.00" y="50.00" width="13.07" height="12.90" fill="#8c9257"/><rect x="12.67" y="50.00" width="13.07" height="12.90" fill="#8c9257"/><rect x="25.34" y="50.00" width="13.07" height="12.90" fill="#8c9257"/><rect x="38.01" y="50.00" width="13.07" height="12.90" fill="#8c9257"/><rect x="50.67" y="50.00" width="13.07" height="12.90" fill="#8c9257"/><rect x="63.34" y="50.00" width="13.07" height="12.90" fill="#8c9257"/><rect x="76.01" y="50.00" width="13.07" height="12.90" fill="#8c9257"/><rect x="88.68" y="50.00" width="13.07" height="12.90" fill="#8c9257"/><rect x="101.35" y="50.00" width="13.07" height="12.90" fill="#8c9257"/><rect x="114.02" y="50.00" width="13.07" height="12.90" fill="#8c9257"/><rect x="126.69" y="50.00" width="13.07" height="12.90" fill="#8c9257"/><rect x="139.36" y="50.00" width="13.07" height="12.90" fill="#8c9257"/><rect x="152.02" y="50.00" width="13.07" height="12.90" fill="#8c9257"/><rect x="164.69" y="50.00" width="13.07" height="12.90" fill="#8c9257"/><rect x="177.36" y="50.00" width="13.07" height="12.90" fill="#8c9257"/><rect x="190.03" y="50.00" width="13.07" height="12.90" fill="#8c9257"/><rect x="0.00" y="62.50" width="13.07" height="12.90" fill="#8c9257"/><rect x="12.67" y="62.50" width="13.07" height="12.90" fill="#8c9257"/><rect x="25.34" y="62.50" width="13.07" height="12.90" fill="#8c9257"/><rect x="38.01" y="62.50" width="13.07" height="12.90" fill="#8c9257"/><rect x="50.67" y="62.50" width="13.07" height="12.90" fill="#8c9257"/><rect x="63.34" y="62.50" width="13.07" height="12.90" fill="#8c9257"/><rect x="76.01" y="62.50" width="13.07" height="12.90" fill="#8c9257"/><rect x="88.68" y="62.50" width="13.07" height="12.90" fill="#8c9257"/><rect x="101.35" y="62.50" width="13.07" height="12.90" fill="#8c9257"/><rect x="114.02" y="62.50" width="13.07" height="12.90" fill="#8c9257"/><rect x="126.69" y="62.50" width="13.07" height="12.90" fill="#8c9257"/><rect x="139.36" y="62.50" width="13.07" height="12.90" fill="#8c9257"/><rect x="152.02" y="62.50" width="13.07" height="12.90" fill="#8c9257"/><rect x="164.69" y="62.50" width="13.07" height="12.90" fill="#8c9257"/><rect x="177.36" y="62.50" width="13.07" height="12.90" fill="#8c9257"/><rect x="190.03" y="62.50" width="13.07" height="12.90" fill="#8c9257"/><rect x="0.00" y="75.00" width="13.07" height="12.90" fill="#8c9257"/><rect x="12.67" y="75.00" width="13.07" height="12.90" fill="#8c9257"/><rect x="25.34" y="75.00" width="13.07" height="12.90" fill="#8c9257"/><rect x="38.01" y="75.00" width="13.07" height="12.90" fill="#8c9257"/><rect x="50.67" y="75.00" width="13.07" height="12.90" fill="#8c9257"/><rect x="63.34" y="75.00" width="13.07" height="12.90" fill="#8c9257"/><rect x="76.01" y="75.00" width="13.07" height="12.90" fill="#8c9257"/><rect x="88.68" y="75.00" width="13.07" height="12.90" fill="#8c9257"/><rect x="101.35" y="75.00" width="13.07" height="12.90" fill="#8c9257"/><rect x="114.02" y="75.00" width="13.07" height="12.90" fill="#8c9257"/><rect x="126.69" y="75.00" width="13.07" height="12.90" fill="#8c9257"/><rect x="139.36" y="75.00" width="13.07" height="12.90" fill="#8c9257"/><rect x="152.02" y="75.00" width="13.07" height="12.90" fill="#8c9257"/><rect x="164.69" y="75.00" width="13.07" height="12.90" fill="#8c9257"/><rect x="177.36" y="75.00" width="13.07" height="12.90" fill="#8c9257"/><rect x="190.03" y="75.00" width="13.07" height="12.90" fill="#8c9257"/></svg><svg class="a" style="left:3631.8px;top:758.6px;" width="28" height="28" viewBox="0 0 16 16"><path d="M4.5 6.5L8 10l3.5-3.5" stroke="#d0d0d0" stroke-width="2" fill="none" stroke-linecap="round" stroke-linejoin="round"/></svg><svg class="a" style="left:3092.0px;top:842.7px;" width="30" height="30" viewBox="0 0 16 16"><path d="M8 1.5l6.5 3L8 7.5 1.5 4.5z" fill="#8a8a8a"/><path d="M1.5 7.5L8 10.5l6.5-3" stroke="#8a8a8a" stroke-width="1.6" fill="none"/><path d="M1.5 10.5L8 13.5l6.5-3" stroke="#8a8a8a" stroke-width="1.6" fill="none"/></svg><div class="a" style="left:3079px;top:928.5px;width:584px;height:258.5px;background:#8a8a8a;"></div><svg class="a" style="left:3081px;top:930.5px" width="580" height="254.5" viewBox="0 0 580 254.5" shape-rendering="crispEdges"><rect x="0.00" y="0.00" width="36.65" height="36.76" fill="#8c9257"/><rect x="36.25" y="0.00" width="36.65" height="36.76" fill="#34333f"/><rect x="72.50" y="0.00" width="36.65" height="36.76" fill="#34333f"/><rect x="108.75" y="0.00" width="36.65" height="36.76" fill="#34333f"/><rect x="145.00" y="0.00" width="36.65" height="36.76" fill="#34333f"/><rect x="181.25" y="0.00" width="36.65" height="36.76" fill="#34333f"/><rect x="217.50" y="0.00" width="36.65" height="36.76" fill="#34333f"/><rect x="253.75" y="0.00" width="36.65" height="36.76" fill="#8c9257"/><rect x="290.00" y="0.00" width="36.65" height="36.76" fill="#8c9257"/><rect x="326.25" y="0.00" width="36.65" height="36.76" fill="#34333f"/><rect x="362.50" y="0.00" width="36.65" height="36.76" fill="#34333f"/><rect x="398.75" y="0.00" width="36.65" height="36.76" fill="#34333f"/><rect x="435.00" y="0.00" width="36.65" height="36.76" fill="#34333f"/><rect x="471.25" y="0.00" width="36.65" height="36.76" fill="#34333f"/><rect x="507.50" y="0.00" width="36.65" height="36.76" fill="#34333f"/><rect x="543.75" y="0.00" width="36.65" height="36.76" fill="#8c9257"/><rect x="0.00" y="36.36" width="36.65" height="36.76" fill="#8c9257"/><rect x="36.25" y="36.36" width="36.65" height="36.76" fill="#34333f"/><rect x="72.50" y="36.36" width="36.65" height="36.76" fill="#b9a55f"/><rect x="108.75" y="36.36" width="36.65" height="36.76" fill="#b9a55f"/><rect x="145.00" y="36.36" width="36.65" height="36.76" fill="#b9a55f"/><rect x="181.25" y="36.36" width="36.65" height="36.76" fill="#b9a55f"/><rect x="217.50" y="36.36" width="36.65" height="36.76" fill="#34333f"/><rect x="253.75" y="36.36" width="36.65" height="36.76" fill="#8c9257"/><rect x="290.00" y="36.36" width="36.65" height="36.76" fill="#8c9257"/><rect x="326.25" y="36.36" width="36.65" height="36.76" fill="#34333f"/><rect x="362.50" y="36.36" width="36.65" height="36.76" fill="#b9a55f"/><rect x="398.75" y="36.36" width="36.65" height="36.76" fill="#b9a55f"/><rect x="435.00" y="36.36" width="36.65" height="36.76" fill="#b9a55f"/><rect x="471.25" y="36.36" width="36.65" height="36.76" fill="#b9a55f"/><rect x="507.50" y="36.36" width="36.65" height="36.76" fill="#34333f"/><rect x="543.75" y="36.36" width="36.65" height="36.76" fill="#8c9257"/><rect x="0.00" y="72.71" width="36.65" height="36.76" fill="#34333f"/><rect x="36.25" y="72.71" width="36.65" height="36.76" fill="#34333f"/><rect x="72.50" y="72.71" width="36.65" height="36.76" fill="#b9a55f"/><rect x="108.75" y="72.71" width="36.65" height="36.76" fill="#8c9257"/><rect x="145.00" y="72.71" width="36.65" height="36.76" fill="#8c9257"/><rect x="181.25" y="72.71" width="36.65" height="36.76" fill="#b9a55f"/><rect x="217.50" y="72.71" width="36.65" height="36.76" fill="#34333f"/><rect x="253.75" y="72.71" width="36.65" height="36.76" fill="#34333f"/><rect x="290.00" y="72.71" width="36.65" height="36.76" fill="#34333f"/><rect x="326.25" y="72.71" width="36.65" height="36.76" fill="#34333f"/><rect x="362.50" y="72.71" width="36.65" height="36.76" fill="#b9a55f"/><rect x="398.75" y="72.71" width="36.65" height="36.76" fill="#8c9257"/><rect x="435.00" y="72.71" width="36.65" height="36.76" fill="#8c9257"/><rect x="471.25" y="72.71" width="36.65" height="36.76" fill="#b9a55f"/><rect x="507.50" y="72.71" width="36.65" height="36.76" fill="#34333f"/><rect x="543.75" y="72.71" width="36.65" height="36.76" fill="#34333f"/><rect x="0.00" y="109.07" width="36.65" height="36.76" fill="#b9a55f"/><rect x="36.25" y="109.07" width="36.65" height="36.76" fill="#b9a55f"/><rect x="72.50" y="109.07" width="36.65" height="36.76" fill="#b9a55f"/><rect x="108.75" y="109.07" width="36.65" height="36.76" fill="#8c9257"/><rect x="145.00" y="109.07" width="36.65" height="36.76" fill="#8c9257"/><rect x="181.25" y="109.07" width="36.65" height="36.76" fill="#b9a55f"/><rect x="217.50" y="109.07" width="36.65" height="36.76" fill="#b9a55f"/><rect x="253.75" y="109.07" width="36.65" height="36.76" fill="#b9a55f"/><rect x="290.00" y="109.07" width="36.65" height="36.76" fill="#b9a55f"/><rect x="326.25" y="109.07" width="36.65" height="36.76" fill="#b9a55f"/><rect x="362.50" y="109.07" width="36.65" height="36.76" fill="#b9a55f"/><rect x="398.75" y="109.07" width="36.65" height="36.76" fill="#8c9257"/><rect x="435.00" y="109.07" width="36.65" height="36.76" fill="#8c9257"/><rect x="471.25" y="109.07" width="36.65" height="36.76" fill="#b9a55f"/><rect x="507.50" y="109.07" width="36.65" height="36.76" fill="#b9a55f"/><rect x="543.75" y="109.07" width="36.65" height="36.76" fill="#b9a55f"/><rect x="0.00" y="145.43" width="36.65" height="36.76" fill="#8c9257"/><rect x="36.25" y="145.43" width="36.65" height="36.76" fill="#8c9257"/><rect x="72.50" y="145.43" width="36.65" height="36.76" fill="#8c9257"/><rect x="108.75" y="145.43" width="36.65" height="36.76" fill="#8c9257"/><rect x="145.00" y="145.43" width="36.65" height="36.76" fill="#8c9257"/><rect x="181.25" y="145.43" width="36.65" height="36.76" fill="#8c9257"/><rect x="217.50" y="145.43" width="36.65" height="36.76" fill="#8c9257"/><rect x="253.75" y="145.43" width="36.65" height="36.76" fill="#8c9257"/><rect x="290.00" y="145.43" width="36.65" height="36.76" fill="#8c9257"/><rect x="326.25" y="145.43" width="36.65" height="36.76" fill="#8c9257"/><rect x="362.50" y="145.43" width="36.65" height="36.76" fill="#8c9257"/><rect x="398.75" y="145.43" width="36.65" height="36.76" fill="#8c9257"/><rect x="435.00" y="145.43" width="36.65" height="36.76" fill="#8c9257"/><rect x="471.25" y="145.43" width="36.65" height="36.76" fill="#8c9257"/><rect x="507.50" y="145.43" width="36.65" height="36.76" fill="#8c9257"/><rect x="543.75" y="145.43" width="36.65" height="36.76" fill="#8c9257"/><rect x="0.00" y="181.79" width="36.65" height="36.76" fill="#8c9257"/><rect x="36.25" y="181.79" width="36.65" height="36.76" fill="#8c9257"/><rect x="72.50" y="181.79" width="36.65" height="36.76" fill="#8c9257"/><rect x="108.75" y="181.79" width="36.65" height="36.76" fill="#8c9257"/><rect x="145.00" y="181.79" width="36.65" height="36.76" fill="#8c9257"/><rect x="181.25" y="181.79" width="36.65" height="36.76" fill="#8c9257"/><rect x="217.50" y="181.79" width="36.65" height="36.76" fill="#8c9257"/><rect x="253.75" y="181.79" width="36.65" height="36.76" fill="#8c9257"/><rect x="290.00" y="181.79" width="36.65" height="36.76" fill="#8c9257"/><rect x="326.25" y="181.79" width="36.65" height="36.76" fill="#8c9257"/><rect x="362.50" y="181.79" width="36.65" height="36.76" fill="#8c9257"/><rect x="398.75" y="181.79" width="36.65" height="36.76" fill="#8c9257"/><rect x="435.00" y="181.79" width="36.65" height="36.76" fill="#8c9257"/><rect x="471.25" y="181.79" width="36.65" height="36.76" fill="#8c9257"/><rect x="507.50" y="181.79" width="36.65" height="36.76" fill="#8c9257"/><rect x="543.75" y="181.79" width="36.65" height="36.76" fill="#8c9257"/><rect x="0.00" y="218.14" width="36.65" height="36.76" fill="#8c9257"/><rect x="36.25" y="218.14" width="36.65" height="36.76" fill="#8c9257"/><rect x="72.50" y="218.14" width="36.65" height="36.76" fill="#8c9257"/><rect x="108.75" y="218.14" width="36.65" height="36.76" fill="#8c9257"/><rect x="145.00" y="218.14" width="36.65" height="36.76" fill="#8c9257"/><rect x="181.25" y="218.14" width="36.65" height="36.76" fill="#8c9257"/><rect x="217.50" y="218.14" width="36.65" height="36.76" fill="#8c9257"/><rect x="253.75" y="218.14" width="36.65" height="36.76" fill="#8c9257"/><rect x="290.00" y="218.14" width="36.65" height="36.76" fill="#8c9257"/><rect x="326.25" y="218.14" width="36.65" height="36.76" fill="#8c9257"/><rect x="362.50" y="218.14" width="36.65" height="36.76" fill="#8c9257"/><rect x="398.75" y="218.14" width="36.65" height="36.76" fill="#8c9257"/><rect x="435.00" y="218.14" width="36.65" height="36.76" fill="#8c9257"/><rect x="471.25" y="218.14" width="36.65" height="36.76" fill="#8c9257"/><rect x="507.50" y="218.14" width="36.65" height="36.76" fill="#8c9257"/><rect x="543.75" y="218.14" width="36.65" height="36.76" fill="#8c9257"/></svg><div class="t" style="left:3404px;top:1239px;font-size:24px;-webkit-text-stroke:0.4px #fff;transform:scaleY(1.12);transform-origin:0 50%;color:#fff;font-family:'Liberation Mono',monospace;text-shadow:0 0 2px #000,0 0 2px #000,1px 1px 1px #000,-1px -1px 1px #000;">16×7 AtlasTexture</div><div class="t" style="left:3094px;top:1324px;font-size:25px;color:#d4d4d4;">Atlas</div><svg class="a" style="left:3326.5px;top:1329.0px;" width="30" height="30" viewBox="0 0 16 16"><path d="M4.2 6A4.5 4.5 0 1 1 5 12" stroke="#e8e8e8" stroke-width="2" fill="none"/><path d="M1.5 5.5h5.2L4 9.5z" fill="#e8e8e8"/></svg><div class="a" style="left:3371.4px;top:1289.8px;width:291.2px;height:110.8px;background:#1c1c1c;border-radius:8px;"></div><svg class="a" style="left:3384.3px;top:1329.0px;" width="30" height="30" viewBox="0 0 16 16"><path d="M7 9l2-2" stroke="#d8d8d8" stroke-width="1.8"/><path d="M6.2 6.8l-2.4 2.4a2 2 0 0 0 3 3l2.4-2.4M9.8 9.2l2.4-2.4a2 2 0 0 0-3-3L6.8 6.2" stroke="#d8d8d8" stroke-width="1.8" fill="none"/></svg><svg class="a" style="left:3439.6px;top:1329.0px;" width="30" height="30" viewBox="0 0 16 16"><rect x="2" y="2" width="9" height="12" fill="#d8d8d8"/><rect x="9" y="2" width="2" height="2" fill="#1c1c1c"/><rect x="11" y="4" width="2" height="2" fill="#d8d8d8"/><rect x="9" y="6" width="2" height="2" fill="#1c1c1c"/><rect x="11" y="8" width="2" height="2" fill="#d8d8d8"/><rect x="9" y="10" width="2" height="2" fill="#1c1c1c"/><rect x="11" y="12" width="2" height="2" fill="#d8d8d8"/><path d="M4 11l4-5 1 1-4 5z" fill="#1c1c1c"/></svg><svg class="a" style="left:3482px;top:1322.7px" width="128" height="44" viewBox="0 0 128 44"><rect x="0" y="0" width="70" height="25" fill="#8c9257"/><rect x="95" y="0" width="33" height="18" fill="#34333f"/><rect x="0" y="25" width="128" height="19" fill="#6a78c0"/><rect x="2" y="27" width="12" height="14" fill="#8c9257"/><rect x="19" y="25" width="9" height="10" fill="#34333f"/><rect x="34" y="27" width="12" height="14" fill="#8c9257"/><rect x="51" y="25" width="9" height="10" fill="#34333f"/><rect x="66" y="27" width="12" height="14" fill="#8c9257"/><rect x="83" y="25" width="9" height="10" fill="#34333f"/><rect x="98" y="27" width="12" height="14" fill="#8c9257"/><rect x="115" y="25" width="9" height="10" fill="#34333f"/><rect x="35" y="13" width="20" height="12" fill="#34333f"/><rect x="4" y="4" width="18" height="16" fill="none" stroke="#34333f" stroke-width="1"/></svg><svg class="a" style="left:3625.4px;top:1330.0px;" width="28" height="28" viewBox="0 0 16 16"><path d="M4.5 6.5L8 10l3.5-3.5" stroke="#8c8c8c" stroke-width="2" fill="none" stroke-linecap="round" stroke-linejoin="round"/></svg><div class="t" style="left:3094px;top:1408px;font-size:25px;color:#d4d4d4;">Region</div><svg class="a" style="left:3625.2px;top:1413.0px;" width="30" height="30" viewBox="0 0 16 16"><path d="M4.2 6A4.5 4.5 0 1 1 5 12" stroke="#e8e8e8" stroke-width="2" fill="none"/><path d="M1.5 5.5h5.2L4 9.5z" fill="#e8e8e8"/></svg><div class="a" style="left:3079px;top:1454.5px;width:583.6px;height:105.5px;background:#1c1c1c;border-radius:8px;"></div><div class="t" style="left:3094px;top:1458px;font-size:25px;color:#b35a62;">x</div><div class="t" style="left:3128px;top:1458px;font-size:25px;color:#e6e6e6;">32.0</div><div class="t" style="left:3190.8px;top:1458px;font-size:25px;color:#7a7a7a;">px</div><div class="t" style="left:3389px;top:1458px;font-size:25px;color:#8ba055;">y</div><div class="t" style="left:3423.5px;top:1458px;font-size:25px;color:#e6e6e6;">25.0</div><div class="t" style="left:3485.8px;top:1458px;font-size:25px;color:#7a7a7a;">px</div><div class="t" style="left:3094px;top:1514.6px;font-size:25px;color:#b35a62;">w</div><div class="t" style="left:3135px;top:1514.6px;font-size:25px;color:#e6e6e6;">16.0</div><div class="t" style="left:3197.7px;top:1514.6px;font-size:25px;color:#7a7a7a;">px</div><div class="t" style="left:3389px;top:1514.6px;font-size:25px;color:#8ba055;">h</div><div class="t" style="left:3423.5px;top:1514.6px;font-size:25px;color:#e6e6e6;">7.0</div><div class="t" style="left:3471.9px;top:1514.6px;font-size:25px;color:#7a7a7a;">px</div><div class="a" style="left:3272.3px;top:1564.8px;width:197.1px;height:55.8px;background:#404040;border-radius:8px;"></div><svg class="a" style="left:3284.6px;top:1577.7px;" width="30" height="30" viewBox="0 0 16 16"><rect x="1.5" y="1.5" width="13" height="13" fill="#7a7a7a"/><rect x="1.5" y="5" width="13" height="1" fill="#404040"/><rect x="1.5" y="11" width="13" height="1" fill="#404040"/><rect x="5" y="1.5" width="1" height="13" fill="#404040"/><rect x="11" y="1.5" width="1" height="13" fill="#404040"/><rect x="6" y="6" width="5" height="5" fill="#e0e0e0"/></svg><div class="t" style="left:3329px;top:1572.7px;font-size:25px;color:#e4e4e4;">Edit Region</div><div class="t" style="left:3094px;top:1628px;font-size:25px;color:#d4d4d4;">Margin</div><div class="a" style="left:3079px;top:1674.4px;width:583.6px;height:106.1px;background:#1c1c1c;border-radius:8px;"></div><div class="t" style="left:3094px;top:1678.2px;font-size:25px;color:#b35a62;">x</div><div class="t" style="left:3128px;top:1678.2px;font-size:25px;color:#e6e6e6;">0.0</div><div class="t" style="left:3176px;top:1678.2px;font-size:25px;color:#7a7a7a;">px</div><div class="t" style="left:3389px;top:1678.2px;font-size:25px;color:#8ba055;">y</div><div class="t" style="left:3423.5px;top:1678.2px;font-size:25px;color:#e6e6e6;">0.0</div><div class="t" style="left:3471px;top:1678.2px;font-size:25px;color:#7a7a7a;">px</div><div class="t" style="left:3094px;top:1735.4px;font-size:25px;color:#b35a62;">w</div><div class="t" style="left:3135px;top:1735.4px;font-size:25px;color:#e6e6e6;">0.0</div><div class="t" style="left:3183px;top:1735.4px;font-size:25px;color:#7a7a7a;">px</div><div class="t" style="left:3389px;top:1735.4px;font-size:25px;color:#8ba055;">h</div><div class="t" style="left:3423.5px;top:1735.4px;font-size:25px;color:#e6e6e6;">0.0</div><div class="t" style="left:3471px;top:1735.4px;font-size:25px;color:#7a7a7a;">px</div><div class="a" style="left:3079px;top:1784.7px;width:300px;height:48.9px;background:#2b313b;border-radius:8px 0 0 8px;"></div><div class="a" style="left:3371.4px;top:1784.7px;width:291.2px;height:48.9px;background:#1c1c1c;border-radius:8px;"></div><div class="a" style="left:3383.4px;top:1796.7px;width:24.3px;height:24.3px;background:#444444;border-radius:4px;"></div><div class="t" style="left:3424px;top:1788.4px;font-size:25px;color:#e6e6e6;">On</div><div class="t" style="left:3094px;top:1788.4px;font-size:25px;color:#d4d4d4;">Filter Clip</div><svg class="a" style="left:3080.0px;top:1842.0px;" width="28" height="28" viewBox="0 0 16 16"><path d="M6.5 4.5L10 8l-3.5 3.5" stroke="#8c8c8c" stroke-width="2" fill="none" stroke-linecap="round" stroke-linejoin="round"/></svg><div class="t" style="left:3111px;top:1836px;font-size:25px;color:#e0e0e0;font-weight:bold;">Resource</div><div class="t" style="left:3535.5px;top:1836px;font-size:25px;color:#9a9a9a;">(1 change)</div><div class="t" style="left:3087px;top:1918.3px;font-size:25px;color:#d4d4d4;">Offset</div><div class="a" style="left:3371.4px;top:1886.5px;width:298.1px;height:105.3px;background:#1c1c1c;border-radius:8px;"></div><div class="t" style="left:3386px;top:1890.3px;font-size:25px;color:#b35a62;">x</div><div class="t" style="left:3420.2px;top:1890.3px;font-size:25px;color:#e6e6e6;">0.0</div><div class="t" style="left:3468px;top:1890.3px;font-size:25px;color:#7a7a7a;">px</div><div class="t" style="left:3386px;top:1947.5px;font-size:25px;color:#8ba055;">y</div><div class="t" style="left:3420.2px;top:1947.5px;font-size:25px;color:#e6e6e6;">0.0</div><div class="t" style="left:3468px;top:1947.5px;font-size:25px;color:#7a7a7a;">px</div><div class="t" style="left:3087px;top:2027.4px;font-size:25px;color:#d4d4d4;">Scale</div><div class="a" style="left:3371.4px;top:1996.8px;width:298.1px;height:104.7px;background:#1c1c1c;border-radius:8px;"></div><div class="t" style="left:3386px;top:1999.7px;font-size:25px;color:#b35a62;">x</div><div class="t" style="left:3420.2px;top:1999.7px;font-size:25px;color:#e6e6e6;">1.0</div><div class="t" style="left:3386px;top:2056.4px;font-size:25px;color:#8ba055;">y</div><div class="t" style="left:3420.2px;top:2056.4px;font-size:25px;color:#e6e6e6;">1.0</div><svg class="a" style="left:3633.6px;top:2034.8px;" width="30" height="30" viewBox="0 0 16 16"><path d="M7 9l2-2" stroke="#e0e0e0" stroke-width="1.8"/><path d="M6.2 6.8l-2.4 2.4a2 2 0 0 0 3 3l2.4-2.4M9.8 9.2l2.4-2.4a2 2 0 0 0-3-3L6.8 6.2" stroke="#e0e0e0" stroke-width="1.8" fill="none"/></svg><div class="t" style="left:3087px;top:2109.6px;font-size:25px;color:#d4d4d4;">Rotation</div><div class="a" style="left:3371.4px;top:2106.5px;width:298.1px;height:48.5px;background:#1c1c1c;border-radius:8px;"></div><div class="t" style="left:3407px;top:2109.4px;font-size:25px;color:#e6e6e6;">0.0</div><div class="t" style="left:3449.8px;top:2105px;font-size:22px;color:#8a8a8a;">°</div><div class="a" style="left:3385.3px;top:2147.2px;width:263.3px;height:2.6px;background:#555555;border-radius:1px;"></div><div class="a" style="left:3385.3px;top:2147.2px;width:135px;height:2.6px;background:#c8c8c8;border-radius:1px;"></div><div class="a" style="left:3516.5px;top:2143.8px;width:7.5px;height:8px;background:#f0f0f0;"></div><svg class="a" style="left:3052.5px;top:2164.3px;" width="28" height="28" viewBox="0 0 16 16"><path d="M6.5 4.5L10 8l-3.5 3.5" stroke="#8c8c8c" stroke-width="2" fill="none" stroke-linecap="round" stroke-linejoin="round"/></svg><div class="t" style="left:3083.8px;top:2158.3px;font-size:25px;color:#e0e0e0;font-weight:bold;">Skeleton</div><div class="a" style="left:3040px;top:2195px;width:664px;height:23px;overflow:hidden;"><div class="t" style="left:43.8px;top:3px;font-size:25px;color:#e0e0e0;font-weight:bold;">Invert</div><div class="a" style="left:564px;top:13px;width:23.7px;height:24px;background:#444;border-radius:4px;"></div><div class="t" style="left:595px;top:4px;font-size:25px;color:#e6e6e6;">On</div></div>
</div></div></body></html>
